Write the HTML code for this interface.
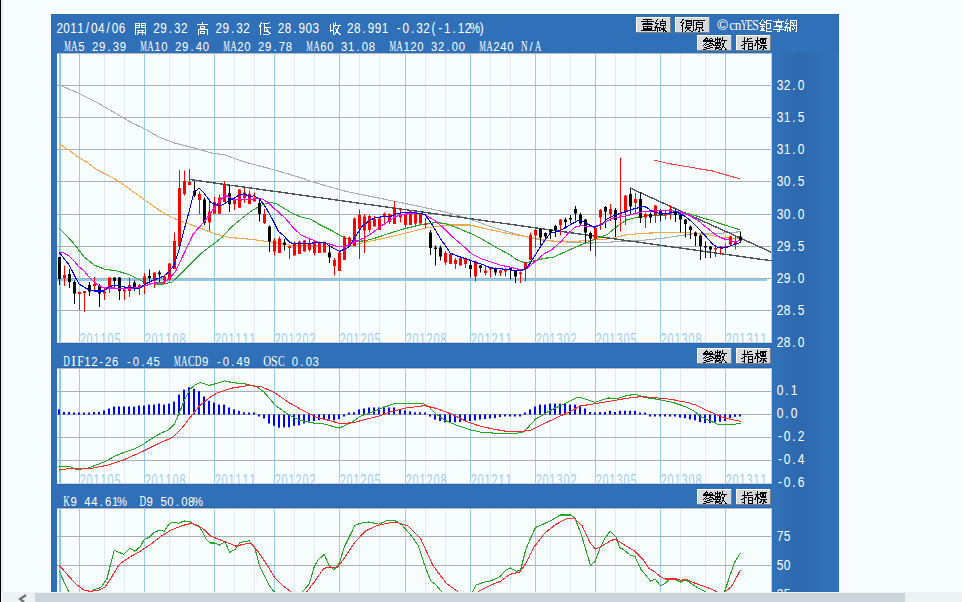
<!DOCTYPE html>
<html><head><meta charset="utf-8"><title>chart</title>
<style>
html,body{margin:0;padding:0;background:#f7fcfe;width:962px;height:602px;overflow:hidden;}
svg{display:block;}
</style></head><body>
<svg width="962" height="602" viewBox="0 0 962 602" shape-rendering="auto">
<rect x="0" y="0" width="962" height="602" fill="#f7fcfe"/>
<rect x="0" y="0" width="1" height="602" fill="#000000"/>
<rect x="1" y="0" width="1" height="592" fill="#e9f1f9"/>
<rect x="2" y="0" width="1" height="592" fill="#dfe7ed"/>
<rect x="51" y="14" width="788" height="578" fill="#3070b8"/>
<rect x="51" y="14" width="788" height="1" fill="#2d6ab0"/>
<linearGradient id="axg" x1="0" x2="1" y1="0" y2="0"><stop offset="0" stop-color="#3173ba"/><stop offset="0.4" stop-color="#2d68ae"/><stop offset="1" stop-color="#3374bc"/></linearGradient>
<rect x="772" y="53" width="67" height="539" fill="url(#axg)"/>
<rect x="57" y="53" width="715" height="290" fill="#f8fdfe"/>
<clipPath id="clip0"><rect x="57" y="53" width="715" height="290"/></clipPath>
<g clip-path="url(#clip0)">
<rect x="104" y="53" width="1" height="290" fill="#e2eaf0"/>
<rect x="124" y="53" width="1" height="290" fill="#e2eaf0"/>
<rect x="169" y="53" width="1" height="290" fill="#e2eaf0"/>
<rect x="189" y="53" width="1" height="290" fill="#e2eaf0"/>
<rect x="234" y="53" width="1" height="290" fill="#e2eaf0"/>
<rect x="254" y="53" width="1" height="290" fill="#e2eaf0"/>
<rect x="294" y="53" width="1" height="290" fill="#e2eaf0"/>
<rect x="314" y="53" width="1" height="290" fill="#e2eaf0"/>
<rect x="359" y="53" width="1" height="290" fill="#e2eaf0"/>
<rect x="379" y="53" width="1" height="290" fill="#e2eaf0"/>
<rect x="425" y="53" width="1" height="290" fill="#e2eaf0"/>
<rect x="445" y="53" width="1" height="290" fill="#e2eaf0"/>
<rect x="490" y="53" width="1" height="290" fill="#e2eaf0"/>
<rect x="510" y="53" width="1" height="290" fill="#e2eaf0"/>
<rect x="550" y="53" width="1" height="290" fill="#e2eaf0"/>
<rect x="570" y="53" width="1" height="290" fill="#e2eaf0"/>
<rect x="615" y="53" width="1" height="290" fill="#e2eaf0"/>
<rect x="635" y="53" width="1" height="290" fill="#e2eaf0"/>
<rect x="680" y="53" width="1" height="290" fill="#e2eaf0"/>
<rect x="705" y="53" width="1" height="290" fill="#e2eaf0"/>
<rect x="79" y="53" width="1" height="290" fill="#9acdee"/>
<rect x="144" y="53" width="1" height="290" fill="#9acdee"/>
<rect x="214" y="53" width="1" height="290" fill="#9acdee"/>
<rect x="274" y="53" width="1" height="290" fill="#9acdee"/>
<rect x="339" y="53" width="1" height="290" fill="#9acdee"/>
<rect x="405" y="53" width="1" height="290" fill="#9acdee"/>
<rect x="470" y="53" width="1" height="290" fill="#9acdee"/>
<rect x="535" y="53" width="1" height="290" fill="#9acdee"/>
<rect x="595" y="53" width="1" height="290" fill="#9acdee"/>
<rect x="660" y="53" width="1" height="290" fill="#9acdee"/>
<rect x="725" y="53" width="1" height="290" fill="#9acdee"/>
<rect x="59" y="53" width="2" height="290" fill="#8dc6f0"/>
<rect x="57" y="85" width="715" height="1" fill="#a8b0b6"/>
<rect x="57" y="117" width="715" height="1" fill="#a8b0b6"/>
<rect x="57" y="149" width="715" height="1" fill="#a8b0b6"/>
<rect x="57" y="181" width="715" height="1" fill="#a8b0b6"/>
<rect x="57" y="214" width="715" height="1" fill="#a8b0b6"/>
<rect x="57" y="246" width="715" height="1" fill="#a8b0b6"/>
<rect x="57" y="278" width="715" height="1" fill="#a8b0b6"/>
<rect x="57" y="310" width="715" height="1" fill="#a8b0b6"/>
<rect x="771" y="53" width="1" height="290" fill="#a8d4ee"/>
<rect x="57" y="53" width="715" height="1" fill="#b4bcc4"/>
<rect x="57" y="342" width="715" height="1" fill="#d2d6d8"/>
<text transform="translate(82.67,344.6) scale(0.660,1)" text-anchor="middle" font-family='"Liberation Sans", sans-serif' font-size="16.50" font-weight="normal" fill="#a2cdeb">2</text>
<text transform="translate(89.62,344.6) scale(0.660,1)" text-anchor="middle" font-family='"Liberation Sans", sans-serif' font-size="16.50" font-weight="normal" fill="#a2cdeb">0</text>
<text transform="translate(96.58,344.6) scale(0.660,1)" text-anchor="middle" font-family='"Liberation Sans", sans-serif' font-size="16.50" font-weight="normal" fill="#a2cdeb">1</text>
<text transform="translate(103.53,344.6) scale(0.660,1)" text-anchor="middle" font-family='"Liberation Sans", sans-serif' font-size="16.50" font-weight="normal" fill="#a2cdeb">1</text>
<text transform="translate(110.48,344.6) scale(0.660,1)" text-anchor="middle" font-family='"Liberation Sans", sans-serif' font-size="16.50" font-weight="normal" fill="#a2cdeb">0</text>
<text transform="translate(117.43,344.6) scale(0.660,1)" text-anchor="middle" font-family='"Liberation Sans", sans-serif' font-size="16.50" font-weight="normal" fill="#a2cdeb">5</text>
<text transform="translate(147.67,344.6) scale(0.660,1)" text-anchor="middle" font-family='"Liberation Sans", sans-serif' font-size="16.50" font-weight="normal" fill="#a2cdeb">2</text>
<text transform="translate(154.62,344.6) scale(0.660,1)" text-anchor="middle" font-family='"Liberation Sans", sans-serif' font-size="16.50" font-weight="normal" fill="#a2cdeb">0</text>
<text transform="translate(161.57,344.6) scale(0.660,1)" text-anchor="middle" font-family='"Liberation Sans", sans-serif' font-size="16.50" font-weight="normal" fill="#a2cdeb">1</text>
<text transform="translate(168.52,344.6) scale(0.660,1)" text-anchor="middle" font-family='"Liberation Sans", sans-serif' font-size="16.50" font-weight="normal" fill="#a2cdeb">1</text>
<text transform="translate(175.47,344.6) scale(0.660,1)" text-anchor="middle" font-family='"Liberation Sans", sans-serif' font-size="16.50" font-weight="normal" fill="#a2cdeb">0</text>
<text transform="translate(182.42,344.6) scale(0.660,1)" text-anchor="middle" font-family='"Liberation Sans", sans-serif' font-size="16.50" font-weight="normal" fill="#a2cdeb">8</text>
<text transform="translate(217.67,344.6) scale(0.660,1)" text-anchor="middle" font-family='"Liberation Sans", sans-serif' font-size="16.50" font-weight="normal" fill="#a2cdeb">2</text>
<text transform="translate(224.62,344.6) scale(0.660,1)" text-anchor="middle" font-family='"Liberation Sans", sans-serif' font-size="16.50" font-weight="normal" fill="#a2cdeb">0</text>
<text transform="translate(231.57,344.6) scale(0.660,1)" text-anchor="middle" font-family='"Liberation Sans", sans-serif' font-size="16.50" font-weight="normal" fill="#a2cdeb">1</text>
<text transform="translate(238.52,344.6) scale(0.660,1)" text-anchor="middle" font-family='"Liberation Sans", sans-serif' font-size="16.50" font-weight="normal" fill="#a2cdeb">1</text>
<text transform="translate(245.47,344.6) scale(0.660,1)" text-anchor="middle" font-family='"Liberation Sans", sans-serif' font-size="16.50" font-weight="normal" fill="#a2cdeb">1</text>
<text transform="translate(252.42,344.6) scale(0.660,1)" text-anchor="middle" font-family='"Liberation Sans", sans-serif' font-size="16.50" font-weight="normal" fill="#a2cdeb">1</text>
<text transform="translate(277.68,344.6) scale(0.660,1)" text-anchor="middle" font-family='"Liberation Sans", sans-serif' font-size="16.50" font-weight="normal" fill="#a2cdeb">2</text>
<text transform="translate(284.62,344.6) scale(0.660,1)" text-anchor="middle" font-family='"Liberation Sans", sans-serif' font-size="16.50" font-weight="normal" fill="#a2cdeb">0</text>
<text transform="translate(291.57,344.6) scale(0.660,1)" text-anchor="middle" font-family='"Liberation Sans", sans-serif' font-size="16.50" font-weight="normal" fill="#a2cdeb">1</text>
<text transform="translate(298.52,344.6) scale(0.660,1)" text-anchor="middle" font-family='"Liberation Sans", sans-serif' font-size="16.50" font-weight="normal" fill="#a2cdeb">2</text>
<text transform="translate(305.47,344.6) scale(0.660,1)" text-anchor="middle" font-family='"Liberation Sans", sans-serif' font-size="16.50" font-weight="normal" fill="#a2cdeb">0</text>
<text transform="translate(312.42,344.6) scale(0.660,1)" text-anchor="middle" font-family='"Liberation Sans", sans-serif' font-size="16.50" font-weight="normal" fill="#a2cdeb">2</text>
<text transform="translate(342.68,344.6) scale(0.660,1)" text-anchor="middle" font-family='"Liberation Sans", sans-serif' font-size="16.50" font-weight="normal" fill="#a2cdeb">2</text>
<text transform="translate(349.62,344.6) scale(0.660,1)" text-anchor="middle" font-family='"Liberation Sans", sans-serif' font-size="16.50" font-weight="normal" fill="#a2cdeb">0</text>
<text transform="translate(356.57,344.6) scale(0.660,1)" text-anchor="middle" font-family='"Liberation Sans", sans-serif' font-size="16.50" font-weight="normal" fill="#a2cdeb">1</text>
<text transform="translate(363.52,344.6) scale(0.660,1)" text-anchor="middle" font-family='"Liberation Sans", sans-serif' font-size="16.50" font-weight="normal" fill="#a2cdeb">2</text>
<text transform="translate(370.47,344.6) scale(0.660,1)" text-anchor="middle" font-family='"Liberation Sans", sans-serif' font-size="16.50" font-weight="normal" fill="#a2cdeb">0</text>
<text transform="translate(377.42,344.6) scale(0.660,1)" text-anchor="middle" font-family='"Liberation Sans", sans-serif' font-size="16.50" font-weight="normal" fill="#a2cdeb">5</text>
<text transform="translate(408.68,344.6) scale(0.660,1)" text-anchor="middle" font-family='"Liberation Sans", sans-serif' font-size="16.50" font-weight="normal" fill="#a2cdeb">2</text>
<text transform="translate(415.62,344.6) scale(0.660,1)" text-anchor="middle" font-family='"Liberation Sans", sans-serif' font-size="16.50" font-weight="normal" fill="#a2cdeb">0</text>
<text transform="translate(422.57,344.6) scale(0.660,1)" text-anchor="middle" font-family='"Liberation Sans", sans-serif' font-size="16.50" font-weight="normal" fill="#a2cdeb">1</text>
<text transform="translate(429.52,344.6) scale(0.660,1)" text-anchor="middle" font-family='"Liberation Sans", sans-serif' font-size="16.50" font-weight="normal" fill="#a2cdeb">2</text>
<text transform="translate(436.47,344.6) scale(0.660,1)" text-anchor="middle" font-family='"Liberation Sans", sans-serif' font-size="16.50" font-weight="normal" fill="#a2cdeb">0</text>
<text transform="translate(443.42,344.6) scale(0.660,1)" text-anchor="middle" font-family='"Liberation Sans", sans-serif' font-size="16.50" font-weight="normal" fill="#a2cdeb">8</text>
<text transform="translate(473.68,344.6) scale(0.660,1)" text-anchor="middle" font-family='"Liberation Sans", sans-serif' font-size="16.50" font-weight="normal" fill="#a2cdeb">2</text>
<text transform="translate(480.62,344.6) scale(0.660,1)" text-anchor="middle" font-family='"Liberation Sans", sans-serif' font-size="16.50" font-weight="normal" fill="#a2cdeb">0</text>
<text transform="translate(487.57,344.6) scale(0.660,1)" text-anchor="middle" font-family='"Liberation Sans", sans-serif' font-size="16.50" font-weight="normal" fill="#a2cdeb">1</text>
<text transform="translate(494.52,344.6) scale(0.660,1)" text-anchor="middle" font-family='"Liberation Sans", sans-serif' font-size="16.50" font-weight="normal" fill="#a2cdeb">2</text>
<text transform="translate(501.47,344.6) scale(0.660,1)" text-anchor="middle" font-family='"Liberation Sans", sans-serif' font-size="16.50" font-weight="normal" fill="#a2cdeb">1</text>
<text transform="translate(508.42,344.6) scale(0.660,1)" text-anchor="middle" font-family='"Liberation Sans", sans-serif' font-size="16.50" font-weight="normal" fill="#a2cdeb">1</text>
<text transform="translate(538.68,344.6) scale(0.660,1)" text-anchor="middle" font-family='"Liberation Sans", sans-serif' font-size="16.50" font-weight="normal" fill="#a2cdeb">2</text>
<text transform="translate(545.63,344.6) scale(0.660,1)" text-anchor="middle" font-family='"Liberation Sans", sans-serif' font-size="16.50" font-weight="normal" fill="#a2cdeb">0</text>
<text transform="translate(552.58,344.6) scale(0.660,1)" text-anchor="middle" font-family='"Liberation Sans", sans-serif' font-size="16.50" font-weight="normal" fill="#a2cdeb">1</text>
<text transform="translate(559.53,344.6) scale(0.660,1)" text-anchor="middle" font-family='"Liberation Sans", sans-serif' font-size="16.50" font-weight="normal" fill="#a2cdeb">3</text>
<text transform="translate(566.48,344.6) scale(0.660,1)" text-anchor="middle" font-family='"Liberation Sans", sans-serif' font-size="16.50" font-weight="normal" fill="#a2cdeb">0</text>
<text transform="translate(573.43,344.6) scale(0.660,1)" text-anchor="middle" font-family='"Liberation Sans", sans-serif' font-size="16.50" font-weight="normal" fill="#a2cdeb">2</text>
<text transform="translate(598.68,344.6) scale(0.660,1)" text-anchor="middle" font-family='"Liberation Sans", sans-serif' font-size="16.50" font-weight="normal" fill="#a2cdeb">2</text>
<text transform="translate(605.63,344.6) scale(0.660,1)" text-anchor="middle" font-family='"Liberation Sans", sans-serif' font-size="16.50" font-weight="normal" fill="#a2cdeb">0</text>
<text transform="translate(612.58,344.6) scale(0.660,1)" text-anchor="middle" font-family='"Liberation Sans", sans-serif' font-size="16.50" font-weight="normal" fill="#a2cdeb">1</text>
<text transform="translate(619.53,344.6) scale(0.660,1)" text-anchor="middle" font-family='"Liberation Sans", sans-serif' font-size="16.50" font-weight="normal" fill="#a2cdeb">3</text>
<text transform="translate(626.48,344.6) scale(0.660,1)" text-anchor="middle" font-family='"Liberation Sans", sans-serif' font-size="16.50" font-weight="normal" fill="#a2cdeb">0</text>
<text transform="translate(633.43,344.6) scale(0.660,1)" text-anchor="middle" font-family='"Liberation Sans", sans-serif' font-size="16.50" font-weight="normal" fill="#a2cdeb">5</text>
<text transform="translate(663.68,344.6) scale(0.660,1)" text-anchor="middle" font-family='"Liberation Sans", sans-serif' font-size="16.50" font-weight="normal" fill="#a2cdeb">2</text>
<text transform="translate(670.63,344.6) scale(0.660,1)" text-anchor="middle" font-family='"Liberation Sans", sans-serif' font-size="16.50" font-weight="normal" fill="#a2cdeb">0</text>
<text transform="translate(677.58,344.6) scale(0.660,1)" text-anchor="middle" font-family='"Liberation Sans", sans-serif' font-size="16.50" font-weight="normal" fill="#a2cdeb">1</text>
<text transform="translate(684.53,344.6) scale(0.660,1)" text-anchor="middle" font-family='"Liberation Sans", sans-serif' font-size="16.50" font-weight="normal" fill="#a2cdeb">3</text>
<text transform="translate(691.48,344.6) scale(0.660,1)" text-anchor="middle" font-family='"Liberation Sans", sans-serif' font-size="16.50" font-weight="normal" fill="#a2cdeb">0</text>
<text transform="translate(698.43,344.6) scale(0.660,1)" text-anchor="middle" font-family='"Liberation Sans", sans-serif' font-size="16.50" font-weight="normal" fill="#a2cdeb">8</text>
<text transform="translate(728.68,344.6) scale(0.660,1)" text-anchor="middle" font-family='"Liberation Sans", sans-serif' font-size="16.50" font-weight="normal" fill="#a2cdeb">2</text>
<text transform="translate(735.63,344.6) scale(0.660,1)" text-anchor="middle" font-family='"Liberation Sans", sans-serif' font-size="16.50" font-weight="normal" fill="#a2cdeb">0</text>
<text transform="translate(742.58,344.6) scale(0.660,1)" text-anchor="middle" font-family='"Liberation Sans", sans-serif' font-size="16.50" font-weight="normal" fill="#a2cdeb">1</text>
<text transform="translate(749.53,344.6) scale(0.660,1)" text-anchor="middle" font-family='"Liberation Sans", sans-serif' font-size="16.50" font-weight="normal" fill="#a2cdeb">3</text>
<text transform="translate(756.48,344.6) scale(0.660,1)" text-anchor="middle" font-family='"Liberation Sans", sans-serif' font-size="16.50" font-weight="normal" fill="#a2cdeb">1</text>
<text transform="translate(763.43,344.6) scale(0.660,1)" text-anchor="middle" font-family='"Liberation Sans", sans-serif' font-size="16.50" font-weight="normal" fill="#a2cdeb">1</text>
</g>
<rect x="57" y="368" width="715" height="116" fill="#f8fdfe"/>
<clipPath id="clip1"><rect x="57" y="368" width="715" height="116"/></clipPath>
<g clip-path="url(#clip1)">
<rect x="104" y="368" width="1" height="116" fill="#e2eaf0"/>
<rect x="124" y="368" width="1" height="116" fill="#e2eaf0"/>
<rect x="169" y="368" width="1" height="116" fill="#e2eaf0"/>
<rect x="189" y="368" width="1" height="116" fill="#e2eaf0"/>
<rect x="234" y="368" width="1" height="116" fill="#e2eaf0"/>
<rect x="254" y="368" width="1" height="116" fill="#e2eaf0"/>
<rect x="294" y="368" width="1" height="116" fill="#e2eaf0"/>
<rect x="314" y="368" width="1" height="116" fill="#e2eaf0"/>
<rect x="359" y="368" width="1" height="116" fill="#e2eaf0"/>
<rect x="379" y="368" width="1" height="116" fill="#e2eaf0"/>
<rect x="425" y="368" width="1" height="116" fill="#e2eaf0"/>
<rect x="445" y="368" width="1" height="116" fill="#e2eaf0"/>
<rect x="490" y="368" width="1" height="116" fill="#e2eaf0"/>
<rect x="510" y="368" width="1" height="116" fill="#e2eaf0"/>
<rect x="550" y="368" width="1" height="116" fill="#e2eaf0"/>
<rect x="570" y="368" width="1" height="116" fill="#e2eaf0"/>
<rect x="615" y="368" width="1" height="116" fill="#e2eaf0"/>
<rect x="635" y="368" width="1" height="116" fill="#e2eaf0"/>
<rect x="680" y="368" width="1" height="116" fill="#e2eaf0"/>
<rect x="705" y="368" width="1" height="116" fill="#e2eaf0"/>
<rect x="79" y="368" width="1" height="116" fill="#9acdee"/>
<rect x="144" y="368" width="1" height="116" fill="#9acdee"/>
<rect x="214" y="368" width="1" height="116" fill="#9acdee"/>
<rect x="274" y="368" width="1" height="116" fill="#9acdee"/>
<rect x="339" y="368" width="1" height="116" fill="#9acdee"/>
<rect x="405" y="368" width="1" height="116" fill="#9acdee"/>
<rect x="470" y="368" width="1" height="116" fill="#9acdee"/>
<rect x="535" y="368" width="1" height="116" fill="#9acdee"/>
<rect x="595" y="368" width="1" height="116" fill="#9acdee"/>
<rect x="660" y="368" width="1" height="116" fill="#9acdee"/>
<rect x="725" y="368" width="1" height="116" fill="#9acdee"/>
<rect x="59" y="368" width="2" height="116" fill="#8dc6f0"/>
<rect x="57" y="391" width="715" height="1" fill="#a8b0b6"/>
<rect x="57" y="414" width="715" height="1" fill="#a8b0b6"/>
<rect x="57" y="437" width="715" height="1" fill="#a8b0b6"/>
<rect x="57" y="460" width="715" height="1" fill="#a8b0b6"/>
<rect x="771" y="368" width="1" height="116" fill="#a8d4ee"/>
<rect x="57" y="368" width="715" height="1" fill="#b4bcc4"/>
<rect x="57" y="483" width="715" height="1" fill="#d2d6d8"/>
<text transform="translate(82.67,485.6) scale(0.660,1)" text-anchor="middle" font-family='"Liberation Sans", sans-serif' font-size="16.50" font-weight="normal" fill="#a2cdeb">2</text>
<text transform="translate(89.62,485.6) scale(0.660,1)" text-anchor="middle" font-family='"Liberation Sans", sans-serif' font-size="16.50" font-weight="normal" fill="#a2cdeb">0</text>
<text transform="translate(96.58,485.6) scale(0.660,1)" text-anchor="middle" font-family='"Liberation Sans", sans-serif' font-size="16.50" font-weight="normal" fill="#a2cdeb">1</text>
<text transform="translate(103.53,485.6) scale(0.660,1)" text-anchor="middle" font-family='"Liberation Sans", sans-serif' font-size="16.50" font-weight="normal" fill="#a2cdeb">1</text>
<text transform="translate(110.48,485.6) scale(0.660,1)" text-anchor="middle" font-family='"Liberation Sans", sans-serif' font-size="16.50" font-weight="normal" fill="#a2cdeb">0</text>
<text transform="translate(117.43,485.6) scale(0.660,1)" text-anchor="middle" font-family='"Liberation Sans", sans-serif' font-size="16.50" font-weight="normal" fill="#a2cdeb">5</text>
<text transform="translate(147.67,485.6) scale(0.660,1)" text-anchor="middle" font-family='"Liberation Sans", sans-serif' font-size="16.50" font-weight="normal" fill="#a2cdeb">2</text>
<text transform="translate(154.62,485.6) scale(0.660,1)" text-anchor="middle" font-family='"Liberation Sans", sans-serif' font-size="16.50" font-weight="normal" fill="#a2cdeb">0</text>
<text transform="translate(161.57,485.6) scale(0.660,1)" text-anchor="middle" font-family='"Liberation Sans", sans-serif' font-size="16.50" font-weight="normal" fill="#a2cdeb">1</text>
<text transform="translate(168.52,485.6) scale(0.660,1)" text-anchor="middle" font-family='"Liberation Sans", sans-serif' font-size="16.50" font-weight="normal" fill="#a2cdeb">1</text>
<text transform="translate(175.47,485.6) scale(0.660,1)" text-anchor="middle" font-family='"Liberation Sans", sans-serif' font-size="16.50" font-weight="normal" fill="#a2cdeb">0</text>
<text transform="translate(182.42,485.6) scale(0.660,1)" text-anchor="middle" font-family='"Liberation Sans", sans-serif' font-size="16.50" font-weight="normal" fill="#a2cdeb">8</text>
<text transform="translate(217.67,485.6) scale(0.660,1)" text-anchor="middle" font-family='"Liberation Sans", sans-serif' font-size="16.50" font-weight="normal" fill="#a2cdeb">2</text>
<text transform="translate(224.62,485.6) scale(0.660,1)" text-anchor="middle" font-family='"Liberation Sans", sans-serif' font-size="16.50" font-weight="normal" fill="#a2cdeb">0</text>
<text transform="translate(231.57,485.6) scale(0.660,1)" text-anchor="middle" font-family='"Liberation Sans", sans-serif' font-size="16.50" font-weight="normal" fill="#a2cdeb">1</text>
<text transform="translate(238.52,485.6) scale(0.660,1)" text-anchor="middle" font-family='"Liberation Sans", sans-serif' font-size="16.50" font-weight="normal" fill="#a2cdeb">1</text>
<text transform="translate(245.47,485.6) scale(0.660,1)" text-anchor="middle" font-family='"Liberation Sans", sans-serif' font-size="16.50" font-weight="normal" fill="#a2cdeb">1</text>
<text transform="translate(252.42,485.6) scale(0.660,1)" text-anchor="middle" font-family='"Liberation Sans", sans-serif' font-size="16.50" font-weight="normal" fill="#a2cdeb">1</text>
<text transform="translate(277.68,485.6) scale(0.660,1)" text-anchor="middle" font-family='"Liberation Sans", sans-serif' font-size="16.50" font-weight="normal" fill="#a2cdeb">2</text>
<text transform="translate(284.62,485.6) scale(0.660,1)" text-anchor="middle" font-family='"Liberation Sans", sans-serif' font-size="16.50" font-weight="normal" fill="#a2cdeb">0</text>
<text transform="translate(291.57,485.6) scale(0.660,1)" text-anchor="middle" font-family='"Liberation Sans", sans-serif' font-size="16.50" font-weight="normal" fill="#a2cdeb">1</text>
<text transform="translate(298.52,485.6) scale(0.660,1)" text-anchor="middle" font-family='"Liberation Sans", sans-serif' font-size="16.50" font-weight="normal" fill="#a2cdeb">2</text>
<text transform="translate(305.47,485.6) scale(0.660,1)" text-anchor="middle" font-family='"Liberation Sans", sans-serif' font-size="16.50" font-weight="normal" fill="#a2cdeb">0</text>
<text transform="translate(312.42,485.6) scale(0.660,1)" text-anchor="middle" font-family='"Liberation Sans", sans-serif' font-size="16.50" font-weight="normal" fill="#a2cdeb">2</text>
<text transform="translate(342.68,485.6) scale(0.660,1)" text-anchor="middle" font-family='"Liberation Sans", sans-serif' font-size="16.50" font-weight="normal" fill="#a2cdeb">2</text>
<text transform="translate(349.62,485.6) scale(0.660,1)" text-anchor="middle" font-family='"Liberation Sans", sans-serif' font-size="16.50" font-weight="normal" fill="#a2cdeb">0</text>
<text transform="translate(356.57,485.6) scale(0.660,1)" text-anchor="middle" font-family='"Liberation Sans", sans-serif' font-size="16.50" font-weight="normal" fill="#a2cdeb">1</text>
<text transform="translate(363.52,485.6) scale(0.660,1)" text-anchor="middle" font-family='"Liberation Sans", sans-serif' font-size="16.50" font-weight="normal" fill="#a2cdeb">2</text>
<text transform="translate(370.47,485.6) scale(0.660,1)" text-anchor="middle" font-family='"Liberation Sans", sans-serif' font-size="16.50" font-weight="normal" fill="#a2cdeb">0</text>
<text transform="translate(377.42,485.6) scale(0.660,1)" text-anchor="middle" font-family='"Liberation Sans", sans-serif' font-size="16.50" font-weight="normal" fill="#a2cdeb">5</text>
<text transform="translate(408.68,485.6) scale(0.660,1)" text-anchor="middle" font-family='"Liberation Sans", sans-serif' font-size="16.50" font-weight="normal" fill="#a2cdeb">2</text>
<text transform="translate(415.62,485.6) scale(0.660,1)" text-anchor="middle" font-family='"Liberation Sans", sans-serif' font-size="16.50" font-weight="normal" fill="#a2cdeb">0</text>
<text transform="translate(422.57,485.6) scale(0.660,1)" text-anchor="middle" font-family='"Liberation Sans", sans-serif' font-size="16.50" font-weight="normal" fill="#a2cdeb">1</text>
<text transform="translate(429.52,485.6) scale(0.660,1)" text-anchor="middle" font-family='"Liberation Sans", sans-serif' font-size="16.50" font-weight="normal" fill="#a2cdeb">2</text>
<text transform="translate(436.47,485.6) scale(0.660,1)" text-anchor="middle" font-family='"Liberation Sans", sans-serif' font-size="16.50" font-weight="normal" fill="#a2cdeb">0</text>
<text transform="translate(443.42,485.6) scale(0.660,1)" text-anchor="middle" font-family='"Liberation Sans", sans-serif' font-size="16.50" font-weight="normal" fill="#a2cdeb">8</text>
<text transform="translate(473.68,485.6) scale(0.660,1)" text-anchor="middle" font-family='"Liberation Sans", sans-serif' font-size="16.50" font-weight="normal" fill="#a2cdeb">2</text>
<text transform="translate(480.62,485.6) scale(0.660,1)" text-anchor="middle" font-family='"Liberation Sans", sans-serif' font-size="16.50" font-weight="normal" fill="#a2cdeb">0</text>
<text transform="translate(487.57,485.6) scale(0.660,1)" text-anchor="middle" font-family='"Liberation Sans", sans-serif' font-size="16.50" font-weight="normal" fill="#a2cdeb">1</text>
<text transform="translate(494.52,485.6) scale(0.660,1)" text-anchor="middle" font-family='"Liberation Sans", sans-serif' font-size="16.50" font-weight="normal" fill="#a2cdeb">2</text>
<text transform="translate(501.47,485.6) scale(0.660,1)" text-anchor="middle" font-family='"Liberation Sans", sans-serif' font-size="16.50" font-weight="normal" fill="#a2cdeb">1</text>
<text transform="translate(508.42,485.6) scale(0.660,1)" text-anchor="middle" font-family='"Liberation Sans", sans-serif' font-size="16.50" font-weight="normal" fill="#a2cdeb">1</text>
<text transform="translate(538.68,485.6) scale(0.660,1)" text-anchor="middle" font-family='"Liberation Sans", sans-serif' font-size="16.50" font-weight="normal" fill="#a2cdeb">2</text>
<text transform="translate(545.63,485.6) scale(0.660,1)" text-anchor="middle" font-family='"Liberation Sans", sans-serif' font-size="16.50" font-weight="normal" fill="#a2cdeb">0</text>
<text transform="translate(552.58,485.6) scale(0.660,1)" text-anchor="middle" font-family='"Liberation Sans", sans-serif' font-size="16.50" font-weight="normal" fill="#a2cdeb">1</text>
<text transform="translate(559.53,485.6) scale(0.660,1)" text-anchor="middle" font-family='"Liberation Sans", sans-serif' font-size="16.50" font-weight="normal" fill="#a2cdeb">3</text>
<text transform="translate(566.48,485.6) scale(0.660,1)" text-anchor="middle" font-family='"Liberation Sans", sans-serif' font-size="16.50" font-weight="normal" fill="#a2cdeb">0</text>
<text transform="translate(573.43,485.6) scale(0.660,1)" text-anchor="middle" font-family='"Liberation Sans", sans-serif' font-size="16.50" font-weight="normal" fill="#a2cdeb">2</text>
<text transform="translate(598.68,485.6) scale(0.660,1)" text-anchor="middle" font-family='"Liberation Sans", sans-serif' font-size="16.50" font-weight="normal" fill="#a2cdeb">2</text>
<text transform="translate(605.63,485.6) scale(0.660,1)" text-anchor="middle" font-family='"Liberation Sans", sans-serif' font-size="16.50" font-weight="normal" fill="#a2cdeb">0</text>
<text transform="translate(612.58,485.6) scale(0.660,1)" text-anchor="middle" font-family='"Liberation Sans", sans-serif' font-size="16.50" font-weight="normal" fill="#a2cdeb">1</text>
<text transform="translate(619.53,485.6) scale(0.660,1)" text-anchor="middle" font-family='"Liberation Sans", sans-serif' font-size="16.50" font-weight="normal" fill="#a2cdeb">3</text>
<text transform="translate(626.48,485.6) scale(0.660,1)" text-anchor="middle" font-family='"Liberation Sans", sans-serif' font-size="16.50" font-weight="normal" fill="#a2cdeb">0</text>
<text transform="translate(633.43,485.6) scale(0.660,1)" text-anchor="middle" font-family='"Liberation Sans", sans-serif' font-size="16.50" font-weight="normal" fill="#a2cdeb">5</text>
<text transform="translate(663.68,485.6) scale(0.660,1)" text-anchor="middle" font-family='"Liberation Sans", sans-serif' font-size="16.50" font-weight="normal" fill="#a2cdeb">2</text>
<text transform="translate(670.63,485.6) scale(0.660,1)" text-anchor="middle" font-family='"Liberation Sans", sans-serif' font-size="16.50" font-weight="normal" fill="#a2cdeb">0</text>
<text transform="translate(677.58,485.6) scale(0.660,1)" text-anchor="middle" font-family='"Liberation Sans", sans-serif' font-size="16.50" font-weight="normal" fill="#a2cdeb">1</text>
<text transform="translate(684.53,485.6) scale(0.660,1)" text-anchor="middle" font-family='"Liberation Sans", sans-serif' font-size="16.50" font-weight="normal" fill="#a2cdeb">3</text>
<text transform="translate(691.48,485.6) scale(0.660,1)" text-anchor="middle" font-family='"Liberation Sans", sans-serif' font-size="16.50" font-weight="normal" fill="#a2cdeb">0</text>
<text transform="translate(698.43,485.6) scale(0.660,1)" text-anchor="middle" font-family='"Liberation Sans", sans-serif' font-size="16.50" font-weight="normal" fill="#a2cdeb">8</text>
<text transform="translate(728.68,485.6) scale(0.660,1)" text-anchor="middle" font-family='"Liberation Sans", sans-serif' font-size="16.50" font-weight="normal" fill="#a2cdeb">2</text>
<text transform="translate(735.63,485.6) scale(0.660,1)" text-anchor="middle" font-family='"Liberation Sans", sans-serif' font-size="16.50" font-weight="normal" fill="#a2cdeb">0</text>
<text transform="translate(742.58,485.6) scale(0.660,1)" text-anchor="middle" font-family='"Liberation Sans", sans-serif' font-size="16.50" font-weight="normal" fill="#a2cdeb">1</text>
<text transform="translate(749.53,485.6) scale(0.660,1)" text-anchor="middle" font-family='"Liberation Sans", sans-serif' font-size="16.50" font-weight="normal" fill="#a2cdeb">3</text>
<text transform="translate(756.48,485.6) scale(0.660,1)" text-anchor="middle" font-family='"Liberation Sans", sans-serif' font-size="16.50" font-weight="normal" fill="#a2cdeb">1</text>
<text transform="translate(763.43,485.6) scale(0.660,1)" text-anchor="middle" font-family='"Liberation Sans", sans-serif' font-size="16.50" font-weight="normal" fill="#a2cdeb">1</text>
</g>
<rect x="57" y="508" width="715" height="92" fill="#f8fdfe"/>
<clipPath id="clip2"><rect x="57" y="508" width="715" height="84"/></clipPath>
<g clip-path="url(#clip2)">
<rect x="104" y="508" width="1" height="92" fill="#e2eaf0"/>
<rect x="124" y="508" width="1" height="92" fill="#e2eaf0"/>
<rect x="169" y="508" width="1" height="92" fill="#e2eaf0"/>
<rect x="189" y="508" width="1" height="92" fill="#e2eaf0"/>
<rect x="234" y="508" width="1" height="92" fill="#e2eaf0"/>
<rect x="254" y="508" width="1" height="92" fill="#e2eaf0"/>
<rect x="294" y="508" width="1" height="92" fill="#e2eaf0"/>
<rect x="314" y="508" width="1" height="92" fill="#e2eaf0"/>
<rect x="359" y="508" width="1" height="92" fill="#e2eaf0"/>
<rect x="379" y="508" width="1" height="92" fill="#e2eaf0"/>
<rect x="425" y="508" width="1" height="92" fill="#e2eaf0"/>
<rect x="445" y="508" width="1" height="92" fill="#e2eaf0"/>
<rect x="490" y="508" width="1" height="92" fill="#e2eaf0"/>
<rect x="510" y="508" width="1" height="92" fill="#e2eaf0"/>
<rect x="550" y="508" width="1" height="92" fill="#e2eaf0"/>
<rect x="570" y="508" width="1" height="92" fill="#e2eaf0"/>
<rect x="615" y="508" width="1" height="92" fill="#e2eaf0"/>
<rect x="635" y="508" width="1" height="92" fill="#e2eaf0"/>
<rect x="680" y="508" width="1" height="92" fill="#e2eaf0"/>
<rect x="705" y="508" width="1" height="92" fill="#e2eaf0"/>
<rect x="79" y="508" width="1" height="92" fill="#9acdee"/>
<rect x="144" y="508" width="1" height="92" fill="#9acdee"/>
<rect x="214" y="508" width="1" height="92" fill="#9acdee"/>
<rect x="274" y="508" width="1" height="92" fill="#9acdee"/>
<rect x="339" y="508" width="1" height="92" fill="#9acdee"/>
<rect x="405" y="508" width="1" height="92" fill="#9acdee"/>
<rect x="470" y="508" width="1" height="92" fill="#9acdee"/>
<rect x="535" y="508" width="1" height="92" fill="#9acdee"/>
<rect x="595" y="508" width="1" height="92" fill="#9acdee"/>
<rect x="660" y="508" width="1" height="92" fill="#9acdee"/>
<rect x="725" y="508" width="1" height="92" fill="#9acdee"/>
<rect x="59" y="508" width="2" height="92" fill="#8dc6f0"/>
<rect x="57" y="536" width="715" height="1" fill="#a8b0b6"/>
<rect x="57" y="565" width="715" height="1" fill="#a8b0b6"/>
<rect x="771" y="508" width="1" height="92" fill="#a8d4ee"/>
<rect x="57" y="508" width="715" height="1" fill="#b4bcc4"/>
<rect x="57" y="599" width="715" height="1" fill="#d2d6d8"/>
</g>
<rect x="57" y="343" width="715" height="1" fill="#2a66ae"/>
<rect x="57" y="367" width="715" height="1" fill="#2a66ae"/>
<rect x="57" y="484" width="715" height="1" fill="#2a66ae"/>
<rect x="57" y="507" width="715" height="1" fill="#2a66ae"/>
<g clip-path="url(#clip0)">
<rect x="57" y="279" width="710" height="2" fill="#8ccbf1"/>
<polyline points="59.5,85.0 78.6,93.3 98.5,103.3 121.8,116.9 131.8,122.9 145.1,129.0 159.3,137.3 173.9,142.8 192.2,147.4 210.5,152.8 225.0,155.0 243.7,161.8 275.0,170.0 300.0,177.5 312.5,181.9 345.0,191.2 392.0,200.8 420.2,206.6 447.0,212.4 461.9,216.6 481.9,223.3 490.0,226.5 515.0,233.7 540.0,240.0 565.0,241.9 590.0,243.1 612.0,242.0 640.0,240.5 662.0,238.4 677.0,236.1 691.9,233.9 706.9,233.1 722.0,233.1 740.0,231.8" fill="none" stroke="#a8b0b6" stroke-width="1.1" stroke-linejoin="round" stroke-linecap="round" opacity="1" shape-rendering="crispEdges"/>
<polyline points="59.0,144.0 68.6,149.8 77.0,156.4 86.9,162.3 96.9,169.8 106.9,174.8 116.0,179.7 121.0,183.0 133.7,192.1 146.5,201.2 159.3,210.4 172.1,217.7 186.7,223.2 201.3,228.6 215.9,234.1 230.0,237.8 238.6,238.1 255.2,239.8 271.8,242.3 282.0,243.9 293.6,245.6 310.2,245.6 332.0,246.5 348.6,246.1 365.2,242.3 392.0,236.5 410.0,232.0 428.5,227.4 450.0,225.0 470.0,225.0 487.0,229.0 507.0,233.3 530.0,237.4 552.5,241.2 577.5,241.2 610.0,238.7 626.9,234.7 646.9,233.1 677.0,232.4 691.9,233.1 706.9,234.6 722.0,237.6 740.0,238.7" fill="none" stroke="#f8a848" stroke-width="1.1" stroke-linejoin="round" stroke-linecap="round" opacity="1" shape-rendering="crispEdges"/>
<polyline points="189.5,179.5 771.0,260.7" fill="none" stroke="#50565b" stroke-width="1.4" stroke-linejoin="round" stroke-linecap="round" opacity="1" shape-rendering="crispEdges"/>
<polyline points="630.0,188.0 771.0,252.0" fill="none" stroke="#50565b" stroke-width="1.4" stroke-linejoin="round" stroke-linecap="round" opacity="1" shape-rendering="crispEdges"/>
<polyline points="655.0,160.3 667.0,163.3 712.0,170.9 726.0,174.9 740.0,178.9" fill="none" stroke="#f04848" stroke-width="1.1" stroke-linejoin="round" stroke-linecap="round" opacity="1" shape-rendering="crispEdges"/>
<polyline points="59.0,228.0 67.0,236.0 75.0,245.0 84.0,257.0 94.0,265.0 104.0,269.0 117.0,271.0 130.0,275.0 144.0,282.0 154.0,284.0 164.0,284.0 172.0,282.0 175.6,278.8 188.6,265.8 201.6,252.9 214.5,243.2 222.0,237.3 232.0,226.5 242.0,218.2 252.0,210.7 262.0,204.9 271.0,202.4 276.8,204.0 285.3,209.1 293.6,214.0 301.9,217.4 310.2,219.0 320.2,224.9 330.2,229.8 342.0,236.5 350.3,239.8 356.9,241.5 365.2,240.7 375.2,238.2 387.0,234.0 403.6,229.0 420.2,224.9 430.2,223.3 436.8,222.4 447.0,224.1 452.0,225.7 461.9,229.9 471.9,234.0 481.9,239.0 491.8,244.9 502.0,250.7 507.0,253.1 516.9,259.8 525.2,263.1 535.2,260.6 545.2,258.1 552.0,257.8 567.0,251.1 582.0,244.4 596.9,238.4 607.0,234.7 617.0,226.4 626.9,219.8 636.9,217.3 646.9,215.6 662.0,215.2 677.0,214.4 688.9,213.7 700.9,217.4 711.4,220.4 722.0,224.2 740.0,229.8" fill="none" stroke="#2aa52a" stroke-width="1.1" stroke-linejoin="round" stroke-linecap="round" opacity="1" shape-rendering="crispEdges"/>
<rect x="59" y="257.0" width="1" height="28.0" fill="#000000"/>
<rect x="58" y="257.0" width="3" height="22.0" fill="#000000"/>
<rect x="64" y="265.5" width="1" height="20.5" fill="#ff0000"/>
<rect x="63" y="275.0" width="3" height="3.0" fill="#ff0000"/>
<rect x="69" y="269.0" width="1" height="19.0" fill="#000000"/>
<rect x="68" y="274.0" width="3" height="8.0" fill="#000000"/>
<rect x="74" y="280.5" width="1" height="23.5" fill="#000000"/>
<rect x="73" y="282.0" width="3" height="11.5" fill="#000000"/>
<rect x="79" y="292.0" width="1" height="18.0" fill="#ff0000"/>
<rect x="78" y="292.0" width="3" height="2.0" fill="#ff0000"/>
<rect x="84" y="291.0" width="1" height="21.0" fill="#ff0000"/>
<rect x="83" y="291.0" width="3" height="2.0" fill="#ff0000"/>
<rect x="89" y="282.0" width="1" height="14.0" fill="#000000"/>
<rect x="88" y="285.0" width="3" height="6.5" fill="#000000"/>
<rect x="94" y="277.0" width="1" height="15.0" fill="#ff0000"/>
<rect x="93" y="284.0" width="3" height="2.0" fill="#ff0000"/>
<rect x="99" y="284.0" width="1" height="23.0" fill="#000000"/>
<rect x="98" y="285.5" width="3" height="8.0" fill="#000000"/>
<rect x="104" y="288.0" width="1" height="12.0" fill="#ff0000"/>
<rect x="103" y="291.5" width="3" height="2.0" fill="#ff0000"/>
<rect x="109" y="277.5" width="1" height="15.5" fill="#ff0000"/>
<rect x="108" y="277.5" width="3" height="10.0" fill="#ff0000"/>
<rect x="114" y="277.5" width="1" height="11.5" fill="#000000"/>
<rect x="113" y="277.5" width="3" height="3.5" fill="#000000"/>
<rect x="119" y="277.0" width="1" height="23.0" fill="#000000"/>
<rect x="118" y="277.5" width="3" height="13.5" fill="#000000"/>
<rect x="124" y="286.0" width="1" height="14.0" fill="#ff0000"/>
<rect x="123" y="290.0" width="3" height="1.5" fill="#ff0000"/>
<rect x="129" y="277.5" width="1" height="19.5" fill="#ff0000"/>
<rect x="128" y="285.0" width="3" height="6.0" fill="#ff0000"/>
<rect x="134" y="280.5" width="1" height="10.5" fill="#000000"/>
<rect x="133" y="282.5" width="3" height="5.5" fill="#000000"/>
<rect x="139" y="284.0" width="1" height="11.0" fill="#ff0000"/>
<rect x="138" y="285.0" width="3" height="3.0" fill="#ff0000"/>
<rect x="144" y="273.0" width="1" height="21.0" fill="#ff0000"/>
<rect x="143" y="276.5" width="3" height="7.5" fill="#ff0000"/>
<rect x="149" y="269.5" width="1" height="13.5" fill="#000000"/>
<rect x="148" y="276.0" width="3" height="2.0" fill="#000000"/>
<rect x="154" y="272.5" width="1" height="15.5" fill="#ff0000"/>
<rect x="153" y="272.5" width="3" height="8.5" fill="#ff0000"/>
<rect x="159" y="270.5" width="1" height="11.5" fill="#000000"/>
<rect x="158" y="272.5" width="3" height="2.0" fill="#000000"/>
<rect x="164" y="276.0" width="1" height="8.0" fill="#ff0000"/>
<rect x="163" y="276.5" width="3" height="3.5" fill="#ff0000"/>
<rect x="169" y="263.0" width="1" height="18.5" fill="#ff0000"/>
<rect x="168" y="263.5" width="3" height="16.5" fill="#ff0000"/>
<rect x="174" y="232.5" width="1" height="36.5" fill="#ff0000"/>
<rect x="173" y="241.0" width="3" height="28.0" fill="#ff0000"/>
<rect x="179" y="170.0" width="1" height="76.0" fill="#ff0000"/>
<rect x="178" y="188.0" width="3" height="58.0" fill="#ff0000"/>
<rect x="184" y="170.5" width="1" height="25.0" fill="#ff0000"/>
<rect x="183" y="181.0" width="3" height="13.0" fill="#ff0000"/>
<rect x="189" y="169.0" width="1" height="16.0" fill="#ff0000"/>
<rect x="188" y="182.0" width="3" height="3.0" fill="#ff0000"/>
<rect x="194" y="181.5" width="1" height="15.5" fill="#000000"/>
<rect x="193" y="191.0" width="3" height="4.5" fill="#000000"/>
<rect x="199" y="191.5" width="1" height="22.5" fill="#ff0000"/>
<rect x="198" y="194.0" width="3" height="6.0" fill="#ff0000"/>
<rect x="204" y="197.5" width="1" height="27.5" fill="#000000"/>
<rect x="203" y="199.5" width="3" height="23.5" fill="#000000"/>
<rect x="209" y="199.0" width="1" height="32.0" fill="#ff0000"/>
<rect x="208" y="211.6" width="3" height="10.8" fill="#ff0000"/>
<rect x="214" y="196.6" width="1" height="17.4" fill="#ff0000"/>
<rect x="213" y="202.0" width="3" height="11.7" fill="#ff0000"/>
<rect x="219" y="194.5" width="1" height="19.5" fill="#ff0000"/>
<rect x="218" y="197.5" width="3" height="16.2" fill="#ff0000"/>
<rect x="224" y="181.2" width="1" height="20.8" fill="#ff0000"/>
<rect x="223" y="184.6" width="3" height="17.4" fill="#ff0000"/>
<rect x="229" y="185.0" width="1" height="27.0" fill="#000000"/>
<rect x="228" y="193.3" width="3" height="10.9" fill="#000000"/>
<rect x="234" y="197.5" width="1" height="12.5" fill="#ff0000"/>
<rect x="233" y="199.5" width="3" height="4.6" fill="#ff0000"/>
<rect x="239" y="189.0" width="1" height="18.8" fill="#ff0000"/>
<rect x="238" y="189.6" width="3" height="18.2" fill="#ff0000"/>
<rect x="244" y="188.0" width="1" height="14.9" fill="#ff0000"/>
<rect x="243" y="192.5" width="3" height="5.4" fill="#ff0000"/>
<rect x="249" y="190.4" width="1" height="13.7" fill="#ff0000"/>
<rect x="248" y="193.7" width="3" height="10.4" fill="#ff0000"/>
<rect x="254" y="192.5" width="1" height="9.0" fill="#ff0000"/>
<rect x="253" y="197.5" width="3" height="4.0" fill="#ff0000"/>
<rect x="259" y="198.0" width="1" height="23.5" fill="#000000"/>
<rect x="258" y="203.0" width="3" height="11.0" fill="#000000"/>
<rect x="264" y="209.0" width="1" height="15.0" fill="#ff0000"/>
<rect x="263" y="214.0" width="3" height="9.0" fill="#ff0000"/>
<rect x="269" y="225.5" width="1" height="26.5" fill="#000000"/>
<rect x="268" y="226.5" width="3" height="15.0" fill="#000000"/>
<rect x="274" y="238.0" width="1" height="17.5" fill="#ff0000"/>
<rect x="273" y="240.5" width="3" height="11.0" fill="#ff0000"/>
<rect x="279" y="236.5" width="1" height="16.5" fill="#ff0000"/>
<rect x="278" y="238.5" width="3" height="14.5" fill="#ff0000"/>
<rect x="284" y="239.0" width="1" height="11.5" fill="#000000"/>
<rect x="283" y="242.5" width="3" height="2.5" fill="#000000"/>
<rect x="289" y="245.5" width="1" height="13.5" fill="#ff0000"/>
<rect x="288" y="246.5" width="3" height="1.5" fill="#ff0000"/>
<rect x="294" y="241.5" width="1" height="14.0" fill="#ff0000"/>
<rect x="293" y="243.0" width="3" height="12.5" fill="#ff0000"/>
<rect x="299" y="240.5" width="1" height="13.5" fill="#ff0000"/>
<rect x="298" y="241.5" width="3" height="12.5" fill="#ff0000"/>
<rect x="304" y="240.0" width="1" height="11.5" fill="#ff0000"/>
<rect x="303" y="240.5" width="3" height="11.0" fill="#ff0000"/>
<rect x="309" y="237.5" width="1" height="14.0" fill="#ff0000"/>
<rect x="308" y="244.0" width="3" height="6.0" fill="#ff0000"/>
<rect x="314" y="240.5" width="1" height="15.0" fill="#ff0000"/>
<rect x="313" y="241.5" width="3" height="11.5" fill="#ff0000"/>
<rect x="319" y="241.5" width="1" height="11.5" fill="#ff0000"/>
<rect x="318" y="242.5" width="3" height="10.5" fill="#ff0000"/>
<rect x="324" y="241.5" width="1" height="11.0" fill="#ff0000"/>
<rect x="323" y="242.5" width="3" height="10.0" fill="#ff0000"/>
<rect x="329" y="243.0" width="1" height="20.0" fill="#000000"/>
<rect x="328" y="252.5" width="3" height="5.0" fill="#000000"/>
<rect x="334" y="258.0" width="1" height="17.5" fill="#ff0000"/>
<rect x="333" y="260.0" width="3" height="6.0" fill="#ff0000"/>
<rect x="339" y="251.5" width="1" height="19.5" fill="#ff0000"/>
<rect x="338" y="252.5" width="3" height="18.5" fill="#ff0000"/>
<rect x="344" y="236.0" width="1" height="24.0" fill="#ff0000"/>
<rect x="343" y="237.5" width="3" height="22.5" fill="#ff0000"/>
<rect x="349" y="236.5" width="1" height="9.5" fill="#ff0000"/>
<rect x="348" y="237.5" width="3" height="8.5" fill="#ff0000"/>
<rect x="354" y="217.5" width="1" height="28.5" fill="#ff0000"/>
<rect x="353" y="218.5" width="3" height="27.5" fill="#ff0000"/>
<rect x="359" y="209.5" width="1" height="49.5" fill="#ff0000"/>
<rect x="358" y="215.0" width="3" height="14.0" fill="#ff0000"/>
<rect x="364" y="214.0" width="1" height="39.0" fill="#ff0000"/>
<rect x="363" y="216.5" width="3" height="14.0" fill="#ff0000"/>
<rect x="369" y="215.0" width="1" height="17.5" fill="#ff0000"/>
<rect x="368" y="216.0" width="3" height="14.0" fill="#ff0000"/>
<rect x="374" y="216.0" width="1" height="10.5" fill="#ff0000"/>
<rect x="373" y="219.0" width="3" height="7.5" fill="#ff0000"/>
<rect x="379" y="217.5" width="1" height="12.5" fill="#ff0000"/>
<rect x="378" y="218.5" width="3" height="11.5" fill="#ff0000"/>
<rect x="384" y="212.5" width="1" height="11.5" fill="#ff0000"/>
<rect x="383" y="213.5" width="3" height="2.5" fill="#ff0000"/>
<rect x="389" y="213.5" width="1" height="10.5" fill="#ff0000"/>
<rect x="388" y="214.0" width="3" height="8.0" fill="#ff0000"/>
<rect x="394" y="201.0" width="1" height="23.0" fill="#ff0000"/>
<rect x="393" y="207.5" width="3" height="16.5" fill="#ff0000"/>
<rect x="400" y="209.0" width="1" height="13.5" fill="#ff0000"/>
<rect x="399" y="214.0" width="3" height="3.5" fill="#ff0000"/>
<rect x="405" y="212.5" width="1" height="15.0" fill="#ff0000"/>
<rect x="404" y="215.0" width="3" height="10.0" fill="#ff0000"/>
<rect x="410" y="211.0" width="1" height="14.0" fill="#ff0000"/>
<rect x="409" y="211.5" width="3" height="13.5" fill="#ff0000"/>
<rect x="415" y="212.5" width="1" height="13.0" fill="#ff0000"/>
<rect x="414" y="213.5" width="3" height="10.0" fill="#ff0000"/>
<rect x="420" y="213.5" width="1" height="10.0" fill="#ff0000"/>
<rect x="419" y="214.0" width="3" height="9.5" fill="#ff0000"/>
<rect x="425" y="218.0" width="1" height="10.0" fill="#ff0000"/>
<rect x="424" y="223.5" width="3" height="1.5" fill="#ff0000"/>
<rect x="430" y="230.0" width="1" height="25.0" fill="#000000"/>
<rect x="429" y="232.5" width="3" height="15.5" fill="#000000"/>
<rect x="435" y="245.5" width="1" height="20.0" fill="#000000"/>
<rect x="434" y="247.5" width="3" height="1.5" fill="#000000"/>
<rect x="440" y="245.5" width="1" height="15.0" fill="#000000"/>
<rect x="439" y="247.5" width="3" height="9.0" fill="#000000"/>
<rect x="445" y="251.0" width="1" height="14.0" fill="#ff0000"/>
<rect x="444" y="253.0" width="3" height="9.5" fill="#ff0000"/>
<rect x="450" y="253.0" width="1" height="11.0" fill="#ff0000"/>
<rect x="449" y="254.0" width="3" height="10.0" fill="#ff0000"/>
<rect x="455" y="258.0" width="1" height="11.0" fill="#ff0000"/>
<rect x="454" y="260.0" width="3" height="4.0" fill="#ff0000"/>
<rect x="460" y="257.5" width="1" height="8.0" fill="#ff0000"/>
<rect x="459" y="258.0" width="3" height="7.5" fill="#ff0000"/>
<rect x="465" y="257.5" width="1" height="10.5" fill="#ff0000"/>
<rect x="464" y="259.0" width="3" height="5.0" fill="#ff0000"/>
<rect x="470" y="260.5" width="1" height="17.0" fill="#000000"/>
<rect x="469" y="265.0" width="3" height="4.0" fill="#000000"/>
<rect x="475" y="260.5" width="1" height="21.0" fill="#ff0000"/>
<rect x="474" y="261.5" width="3" height="15.0" fill="#ff0000"/>
<rect x="480" y="265.0" width="1" height="7.5" fill="#000000"/>
<rect x="479" y="265.5" width="3" height="2.5" fill="#000000"/>
<rect x="485" y="265.5" width="1" height="10.0" fill="#ff0000"/>
<rect x="484" y="270.5" width="3" height="2.5" fill="#ff0000"/>
<rect x="490" y="268.0" width="1" height="9.5" fill="#ff0000"/>
<rect x="489" y="268.0" width="3" height="1.5" fill="#ff0000"/>
<rect x="495" y="267.5" width="1" height="8.0" fill="#000000"/>
<rect x="494" y="269.0" width="3" height="3.5" fill="#000000"/>
<rect x="500" y="269.5" width="1" height="6.5" fill="#ff0000"/>
<rect x="499" y="270.5" width="3" height="2.5" fill="#ff0000"/>
<rect x="505" y="268.0" width="1" height="8.5" fill="#ff0000"/>
<rect x="504" y="270.0" width="3" height="1.5" fill="#ff0000"/>
<rect x="510" y="267.5" width="1" height="12.0" fill="#000000"/>
<rect x="509" y="268.0" width="3" height="2.0" fill="#000000"/>
<rect x="515" y="270.0" width="1" height="13.0" fill="#000000"/>
<rect x="514" y="270.5" width="3" height="6.0" fill="#000000"/>
<rect x="520" y="271.5" width="1" height="11.5" fill="#ff0000"/>
<rect x="519" y="272.5" width="3" height="1.5" fill="#ff0000"/>
<rect x="525" y="261.5" width="1" height="20.0" fill="#ff0000"/>
<rect x="524" y="262.5" width="3" height="6.5" fill="#ff0000"/>
<rect x="530" y="232.5" width="1" height="27.5" fill="#ff0000"/>
<rect x="529" y="235.0" width="3" height="25.0" fill="#ff0000"/>
<rect x="535" y="229.0" width="1" height="19.0" fill="#ff0000"/>
<rect x="534" y="230.0" width="3" height="5.5" fill="#ff0000"/>
<rect x="540" y="228.0" width="1" height="17.5" fill="#000000"/>
<rect x="539" y="229.0" width="3" height="8.5" fill="#000000"/>
<rect x="545" y="232.5" width="1" height="7.5" fill="#000000"/>
<rect x="544" y="233.0" width="3" height="3.5" fill="#000000"/>
<rect x="550" y="229.0" width="1" height="10.0" fill="#000000"/>
<rect x="549" y="230.0" width="3" height="2.5" fill="#000000"/>
<rect x="555" y="225.0" width="1" height="12.0" fill="#000000"/>
<rect x="554" y="226.0" width="3" height="4.0" fill="#000000"/>
<rect x="560" y="219.0" width="1" height="16.5" fill="#ff0000"/>
<rect x="559" y="219.5" width="3" height="5.5" fill="#ff0000"/>
<rect x="565" y="217.5" width="1" height="11.0" fill="#000000"/>
<rect x="564" y="219.5" width="3" height="2.5" fill="#000000"/>
<rect x="570" y="215.0" width="1" height="8.5" fill="#000000"/>
<rect x="569" y="218.0" width="3" height="1.5" fill="#000000"/>
<rect x="575" y="206.0" width="1" height="14.5" fill="#000000"/>
<rect x="574" y="209.0" width="3" height="4.5" fill="#000000"/>
<rect x="580" y="213.0" width="1" height="12.0" fill="#000000"/>
<rect x="579" y="214.5" width="3" height="9.0" fill="#000000"/>
<rect x="585" y="219.0" width="1" height="24.0" fill="#000000"/>
<rect x="584" y="219.5" width="3" height="13.0" fill="#000000"/>
<rect x="590" y="231.5" width="1" height="19.5" fill="#000000"/>
<rect x="589" y="233.0" width="3" height="5.5" fill="#000000"/>
<rect x="595" y="226.5" width="1" height="30.0" fill="#ff0000"/>
<rect x="594" y="228.0" width="3" height="11.0" fill="#ff0000"/>
<rect x="600" y="209.0" width="1" height="21.0" fill="#ff0000"/>
<rect x="599" y="210.0" width="3" height="7.5" fill="#ff0000"/>
<rect x="605" y="206.0" width="1" height="22.0" fill="#000000"/>
<rect x="604" y="207.0" width="3" height="4.5" fill="#000000"/>
<rect x="610" y="204.0" width="1" height="17.0" fill="#ff0000"/>
<rect x="609" y="209.0" width="3" height="5.0" fill="#ff0000"/>
<rect x="615" y="208.0" width="1" height="29.0" fill="#000000"/>
<rect x="614" y="210.0" width="3" height="10.0" fill="#000000"/>
<rect x="620" y="157.5" width="1" height="74.0" fill="#ff0000"/>
<rect x="619" y="215.5" width="3" height="1.5" fill="#ff0000"/>
<rect x="625" y="195.0" width="1" height="30.0" fill="#ff0000"/>
<rect x="624" y="195.5" width="3" height="16.0" fill="#ff0000"/>
<rect x="630" y="189.0" width="1" height="26.0" fill="#000000"/>
<rect x="629" y="194.0" width="3" height="12.5" fill="#000000"/>
<rect x="635" y="193.0" width="1" height="21.0" fill="#ff0000"/>
<rect x="634" y="199.0" width="3" height="4.0" fill="#ff0000"/>
<rect x="640" y="192.5" width="1" height="30.5" fill="#000000"/>
<rect x="639" y="199.0" width="3" height="19.0" fill="#000000"/>
<rect x="645" y="212.5" width="1" height="15.5" fill="#ff0000"/>
<rect x="644" y="214.0" width="3" height="3.5" fill="#ff0000"/>
<rect x="650" y="212.5" width="1" height="10.5" fill="#000000"/>
<rect x="649" y="214.0" width="3" height="3.5" fill="#000000"/>
<rect x="655" y="205.0" width="1" height="18.0" fill="#ff0000"/>
<rect x="654" y="205.5" width="3" height="10.0" fill="#ff0000"/>
<rect x="660" y="209.0" width="1" height="12.5" fill="#000000"/>
<rect x="659" y="210.0" width="3" height="5.0" fill="#000000"/>
<rect x="665" y="209.5" width="1" height="10.0" fill="#ff0000"/>
<rect x="664" y="213.0" width="3" height="2.5" fill="#ff0000"/>
<rect x="670" y="205.5" width="1" height="14.0" fill="#ff0000"/>
<rect x="669" y="209.0" width="3" height="4.5" fill="#ff0000"/>
<rect x="675" y="209.0" width="1" height="13.0" fill="#000000"/>
<rect x="674" y="211.5" width="3" height="3.5" fill="#000000"/>
<rect x="680" y="213.5" width="1" height="19.0" fill="#000000"/>
<rect x="679" y="215.0" width="3" height="4.5" fill="#000000"/>
<rect x="685" y="219.0" width="1" height="18.5" fill="#000000"/>
<rect x="684" y="219.5" width="3" height="4.5" fill="#000000"/>
<rect x="690" y="225.5" width="1" height="13.5" fill="#000000"/>
<rect x="689" y="226.5" width="3" height="3.5" fill="#000000"/>
<rect x="695" y="231.5" width="1" height="14.5" fill="#000000"/>
<rect x="694" y="232.5" width="3" height="3.5" fill="#000000"/>
<rect x="700" y="234.5" width="1" height="25.5" fill="#000000"/>
<rect x="699" y="235.5" width="3" height="10.5" fill="#000000"/>
<rect x="705" y="241.5" width="1" height="16.5" fill="#000000"/>
<rect x="704" y="246.0" width="3" height="1.5" fill="#000000"/>
<rect x="710" y="246.0" width="1" height="12.0" fill="#000000"/>
<rect x="709" y="246.5" width="3" height="3.0" fill="#000000"/>
<rect x="715" y="246.5" width="1" height="10.5" fill="#ff0000"/>
<rect x="714" y="248.0" width="3" height="1.5" fill="#ff0000"/>
<rect x="720" y="246.0" width="1" height="9.0" fill="#ff0000"/>
<rect x="719" y="246.5" width="3" height="1.5" fill="#ff0000"/>
<rect x="725" y="243.5" width="1" height="10.0" fill="#ff0000"/>
<rect x="724" y="246.0" width="3" height="2.0" fill="#ff0000"/>
<rect x="730" y="235.5" width="1" height="10.0" fill="#ff0000"/>
<rect x="729" y="236.5" width="3" height="8.0" fill="#ff0000"/>
<rect x="735" y="235.5" width="1" height="14.0" fill="#ff0000"/>
<rect x="734" y="241.5" width="3" height="3.0" fill="#ff0000"/>
<rect x="740" y="231.5" width="1" height="11.0" fill="#000000"/>
<rect x="739" y="236.5" width="3" height="4.0" fill="#000000"/>
<polyline points="59.0,252.0 64.0,253.0 69.0,256.0 74.0,261.0 79.0,267.0 84.0,271.0 89.0,277.0 94.0,282.0 99.0,286.0 104.0,288.0 114.0,288.0 124.0,289.0 134.0,288.0 144.0,286.0 154.0,283.0 164.0,282.0 169.0,279.0 175.6,271.2 184.3,252.9 193.0,234.5 198.3,228.2 205.0,220.7 211.6,211.6 218.3,202.4 224.9,195.4 229.9,197.5 234.9,199.5 241.6,200.0 249.9,199.5 260.2,198.2 266.9,201.6 273.5,208.2 277.0,210.7 285.3,218.2 293.6,228.2 301.9,235.6 310.2,239.0 318.5,242.3 326.8,243.1 337.0,246.4 345.3,246.5 355.3,241.5 363.6,238.2 371.9,233.2 380.2,226.5 387.0,222.4 395.3,216.6 403.6,214.1 420.2,213.3 426.9,215.8 435.2,220.8 441.8,226.5 447.0,231.5 452.0,236.5 461.9,244.9 471.9,254.0 481.9,259.0 491.8,262.3 502.0,265.6 507.0,266.4 516.9,268.9 525.2,269.8 535.2,261.4 545.2,253.1 552.0,249.6 561.0,241.4 568.5,233.1 576.0,226.4 582.0,225.7 588.0,226.7 595.4,226.4 602.9,223.4 612.0,218.2 623.6,216.4 633.6,214.0 643.5,211.5 655.2,210.6 671.0,210.7 680.0,212.2 688.9,215.2 697.9,220.4 706.9,227.9 714.4,233.9 722.0,238.4 728.0,239.7 734.0,241.7 740.0,240.7" fill="none" stroke="#ff00ff" stroke-width="1.1" stroke-linejoin="round" stroke-linecap="round" opacity="1" shape-rendering="crispEdges"/>
<polyline points="59.0,252.0 69.0,265.0 79.0,284.0 84.0,287.0 89.0,290.0 94.0,291.0 104.0,291.0 109.0,287.0 114.0,285.0 124.0,287.0 134.0,288.0 139.0,289.0 144.0,285.0 149.0,282.0 154.0,280.0 164.0,276.0 169.0,272.0 174.0,265.0 179.0,250.0 184.0,230.0 189.0,212.0 194.0,192.0 199.2,188.3 204.1,193.3 210.8,202.4 216.6,204.9 221.6,205.4 225.8,202.9 229.1,200.4 234.1,198.3 239.1,195.0 244.0,193.7 249.9,196.6 254.4,195.7 260.2,199.9 265.2,206.5 271.8,218.2 278.5,231.5 283.6,235.6 289.5,242.3 293.6,243.6 310.2,243.6 315.2,242.3 325.2,242.8 330.2,246.4 339.5,251.4 348.6,247.3 355.3,236.5 361.9,226.5 370.2,219.9 376.8,217.4 385.2,216.6 392.0,216.0 397.0,213.3 406.9,212.4 420.2,213.3 425.2,214.9 430.2,221.6 435.2,229.9 440.2,238.2 447.0,248.1 450.3,253.2 458.6,256.5 466.9,259.0 475.2,262.3 483.5,264.8 490.2,267.8 502.0,268.9 515.3,270.6 525.2,269.8 530.2,263.1 538.5,249.8 545.2,239.9 550.2,233.2 557.0,231.5 561.0,230.1 570.0,224.9 579.7,219.7 586.4,223.4 593.9,227.2 601.4,224.9 607.0,218.9 613.6,215.6 623.6,212.3 633.6,209.0 643.5,206.5 646.9,207.3 651.9,211.5 662.0,214.0 669.5,213.4 675.5,211.4 684.5,215.9 691.9,221.9 699.4,229.4 705.4,236.1 712.9,244.4 717.4,247.4 722.0,248.1 726.0,247.7 732.0,245.3 740.0,242.7" fill="none" stroke="#0000ff" stroke-width="1.1" stroke-linejoin="round" stroke-linecap="round" opacity="1" shape-rendering="crispEdges"/>
</g>
<g clip-path="url(#clip1)">
<rect x="58" y="409.4" width="2" height="5.1" fill="#0000ff"/>
<rect x="63" y="412.0" width="2" height="2.5" fill="#0000ff"/>
<rect x="68" y="412.0" width="2" height="2.5" fill="#0000ff"/>
<rect x="73" y="412.5" width="2" height="2.0" fill="#0000ff"/>
<rect x="78" y="412.5" width="2" height="2.0" fill="#0000ff"/>
<rect x="83" y="412.5" width="2" height="2.0" fill="#0000ff"/>
<rect x="88" y="412.5" width="2" height="2.0" fill="#0000ff"/>
<rect x="93" y="412.0" width="2" height="2.5" fill="#0000ff"/>
<rect x="98" y="412.0" width="2" height="2.5" fill="#0000ff"/>
<rect x="103" y="410.4" width="2" height="4.1" fill="#0000ff"/>
<rect x="108" y="408.5" width="2" height="6.0" fill="#0000ff"/>
<rect x="113" y="406.5" width="2" height="8.0" fill="#0000ff"/>
<rect x="118" y="406.5" width="2" height="8.0" fill="#0000ff"/>
<rect x="123" y="406.5" width="2" height="8.0" fill="#0000ff"/>
<rect x="128" y="406.5" width="2" height="8.0" fill="#0000ff"/>
<rect x="133" y="406.5" width="2" height="8.0" fill="#0000ff"/>
<rect x="138" y="405.6" width="2" height="8.9" fill="#0000ff"/>
<rect x="143" y="405.6" width="2" height="8.9" fill="#0000ff"/>
<rect x="148" y="404.6" width="2" height="9.9" fill="#0000ff"/>
<rect x="153" y="404.6" width="2" height="9.9" fill="#0000ff"/>
<rect x="158" y="403.6" width="2" height="10.9" fill="#0000ff"/>
<rect x="163" y="404.6" width="2" height="9.9" fill="#0000ff"/>
<rect x="168" y="403.6" width="2" height="10.9" fill="#0000ff"/>
<rect x="173" y="401.7" width="2" height="12.8" fill="#0000ff"/>
<rect x="178" y="394.6" width="2" height="19.9" fill="#0000ff"/>
<rect x="183" y="389.6" width="2" height="24.9" fill="#0000ff"/>
<rect x="188" y="387.3" width="2" height="27.2" fill="#0000ff"/>
<rect x="193" y="388.8" width="2" height="25.7" fill="#0000ff"/>
<rect x="198" y="391.1" width="2" height="23.4" fill="#0000ff"/>
<rect x="203" y="396.5" width="2" height="18.0" fill="#0000ff"/>
<rect x="208" y="400.8" width="2" height="13.7" fill="#0000ff"/>
<rect x="213" y="402.7" width="2" height="11.8" fill="#0000ff"/>
<rect x="218" y="404.6" width="2" height="9.9" fill="#0000ff"/>
<rect x="223" y="404.6" width="2" height="9.9" fill="#0000ff"/>
<rect x="228" y="407.5" width="2" height="7.0" fill="#0000ff"/>
<rect x="233" y="409.4" width="2" height="5.1" fill="#0000ff"/>
<rect x="238" y="410.8" width="2" height="3.7" fill="#0000ff"/>
<rect x="243" y="412.3" width="2" height="2.2" fill="#0000ff"/>
<rect x="248" y="412.5" width="2" height="2.0" fill="#0000ff"/>
<rect x="253" y="412.5" width="2" height="2.0" fill="#0000ff"/>
<rect x="258" y="414.5" width="2" height="2.0" fill="#0000ff"/>
<rect x="263" y="414.5" width="2" height="4.0" fill="#0000ff"/>
<rect x="268" y="414.5" width="2" height="9.0" fill="#0000ff"/>
<rect x="273" y="414.5" width="2" height="11.3" fill="#0000ff"/>
<rect x="278" y="414.5" width="2" height="13.2" fill="#0000ff"/>
<rect x="283" y="414.5" width="2" height="12.8" fill="#0000ff"/>
<rect x="288" y="414.5" width="2" height="12.8" fill="#0000ff"/>
<rect x="293" y="414.5" width="2" height="11.3" fill="#0000ff"/>
<rect x="298" y="414.5" width="2" height="10.9" fill="#0000ff"/>
<rect x="303" y="414.5" width="2" height="9.0" fill="#0000ff"/>
<rect x="308" y="414.5" width="2" height="7.1" fill="#0000ff"/>
<rect x="313" y="414.5" width="2" height="6.5" fill="#0000ff"/>
<rect x="318" y="414.5" width="2" height="5.5" fill="#0000ff"/>
<rect x="323" y="414.5" width="2" height="5.1" fill="#0000ff"/>
<rect x="328" y="414.5" width="2" height="5.1" fill="#0000ff"/>
<rect x="333" y="414.5" width="2" height="5.9" fill="#0000ff"/>
<rect x="338" y="414.5" width="2" height="4.5" fill="#0000ff"/>
<rect x="343" y="414.5" width="2" height="2.0" fill="#0000ff"/>
<rect x="348" y="412.5" width="2" height="2.0" fill="#0000ff"/>
<rect x="353" y="412.3" width="2" height="2.2" fill="#0000ff"/>
<rect x="358" y="409.4" width="2" height="5.1" fill="#0000ff"/>
<rect x="363" y="408.5" width="2" height="6.0" fill="#0000ff"/>
<rect x="368" y="407.5" width="2" height="7.0" fill="#0000ff"/>
<rect x="373" y="407.5" width="2" height="7.0" fill="#0000ff"/>
<rect x="378" y="407.5" width="2" height="7.0" fill="#0000ff"/>
<rect x="383" y="406.5" width="2" height="8.0" fill="#0000ff"/>
<rect x="388" y="407.5" width="2" height="7.0" fill="#0000ff"/>
<rect x="393" y="407.5" width="2" height="7.0" fill="#0000ff"/>
<rect x="399" y="409.4" width="2" height="5.1" fill="#0000ff"/>
<rect x="404" y="410.4" width="2" height="4.1" fill="#0000ff"/>
<rect x="409" y="411.4" width="2" height="3.1" fill="#0000ff"/>
<rect x="414" y="412.3" width="2" height="2.2" fill="#0000ff"/>
<rect x="419" y="412.3" width="2" height="2.2" fill="#0000ff"/>
<rect x="424" y="412.5" width="2" height="2.0" fill="#0000ff"/>
<rect x="429" y="414.5" width="2" height="2.0" fill="#0000ff"/>
<rect x="434" y="414.5" width="2" height="5.1" fill="#0000ff"/>
<rect x="439" y="414.5" width="2" height="6.5" fill="#0000ff"/>
<rect x="444" y="414.5" width="2" height="7.8" fill="#0000ff"/>
<rect x="449" y="414.5" width="2" height="7.8" fill="#0000ff"/>
<rect x="454" y="414.5" width="2" height="7.8" fill="#0000ff"/>
<rect x="459" y="414.5" width="2" height="7.5" fill="#0000ff"/>
<rect x="464" y="414.5" width="2" height="6.5" fill="#0000ff"/>
<rect x="469" y="414.5" width="2" height="6.5" fill="#0000ff"/>
<rect x="474" y="414.5" width="2" height="5.9" fill="#0000ff"/>
<rect x="479" y="414.5" width="2" height="5.1" fill="#0000ff"/>
<rect x="484" y="414.5" width="2" height="4.5" fill="#0000ff"/>
<rect x="489" y="414.5" width="2" height="4.0" fill="#0000ff"/>
<rect x="494" y="414.5" width="2" height="3.6" fill="#0000ff"/>
<rect x="499" y="414.5" width="2" height="2.6" fill="#0000ff"/>
<rect x="504" y="414.5" width="2" height="2.0" fill="#0000ff"/>
<rect x="509" y="414.5" width="2" height="2.0" fill="#0000ff"/>
<rect x="514" y="414.5" width="2" height="2.0" fill="#0000ff"/>
<rect x="519" y="414.5" width="2" height="2.0" fill="#0000ff"/>
<rect x="524" y="412.5" width="2" height="2.0" fill="#0000ff"/>
<rect x="529" y="409.4" width="2" height="5.1" fill="#0000ff"/>
<rect x="534" y="406.5" width="2" height="8.0" fill="#0000ff"/>
<rect x="539" y="404.6" width="2" height="9.9" fill="#0000ff"/>
<rect x="544" y="404.6" width="2" height="9.9" fill="#0000ff"/>
<rect x="549" y="403.6" width="2" height="10.9" fill="#0000ff"/>
<rect x="554" y="403.6" width="2" height="10.9" fill="#0000ff"/>
<rect x="559" y="403.6" width="2" height="10.9" fill="#0000ff"/>
<rect x="564" y="403.6" width="2" height="10.9" fill="#0000ff"/>
<rect x="569" y="404.6" width="2" height="9.9" fill="#0000ff"/>
<rect x="574" y="404.6" width="2" height="9.9" fill="#0000ff"/>
<rect x="579" y="405.6" width="2" height="8.9" fill="#0000ff"/>
<rect x="584" y="408.5" width="2" height="6.0" fill="#0000ff"/>
<rect x="589" y="412.0" width="2" height="2.5" fill="#0000ff"/>
<rect x="594" y="412.5" width="2" height="2.0" fill="#0000ff"/>
<rect x="599" y="412.0" width="2" height="2.5" fill="#0000ff"/>
<rect x="604" y="412.0" width="2" height="2.5" fill="#0000ff"/>
<rect x="609" y="410.8" width="2" height="3.7" fill="#0000ff"/>
<rect x="614" y="412.0" width="2" height="2.5" fill="#0000ff"/>
<rect x="619" y="410.8" width="2" height="3.7" fill="#0000ff"/>
<rect x="624" y="410.8" width="2" height="3.7" fill="#0000ff"/>
<rect x="629" y="410.8" width="2" height="3.7" fill="#0000ff"/>
<rect x="634" y="410.8" width="2" height="3.7" fill="#0000ff"/>
<rect x="639" y="412.5" width="2" height="2.0" fill="#0000ff"/>
<rect x="644" y="412.5" width="2" height="2.0" fill="#0000ff"/>
<rect x="649" y="414.5" width="2" height="2.0" fill="#0000ff"/>
<rect x="654" y="414.5" width="2" height="2.0" fill="#0000ff"/>
<rect x="659" y="414.5" width="2" height="2.0" fill="#0000ff"/>
<rect x="664" y="414.5" width="2" height="2.0" fill="#0000ff"/>
<rect x="669" y="414.5" width="2" height="2.0" fill="#0000ff"/>
<rect x="674" y="414.5" width="2" height="2.0" fill="#0000ff"/>
<rect x="679" y="414.5" width="2" height="3.0" fill="#0000ff"/>
<rect x="684" y="414.5" width="2" height="3.7" fill="#0000ff"/>
<rect x="689" y="414.5" width="2" height="4.8" fill="#0000ff"/>
<rect x="694" y="414.5" width="2" height="5.8" fill="#0000ff"/>
<rect x="699" y="414.5" width="2" height="7.6" fill="#0000ff"/>
<rect x="704" y="414.5" width="2" height="8.6" fill="#0000ff"/>
<rect x="709" y="414.5" width="2" height="8.6" fill="#0000ff"/>
<rect x="714" y="414.5" width="2" height="7.9" fill="#0000ff"/>
<rect x="719" y="414.5" width="2" height="7.2" fill="#0000ff"/>
<rect x="724" y="414.5" width="2" height="6.5" fill="#0000ff"/>
<rect x="729" y="414.5" width="2" height="3.7" fill="#0000ff"/>
<rect x="734" y="414.5" width="2" height="2.3" fill="#0000ff"/>
<rect x="739" y="414.5" width="2" height="2.0" fill="#0000ff"/>
<polyline points="58.9,466.3 70.5,466.7 74.3,468.6 87.8,468.2 95.5,465.3 105.2,461.4 114.8,456.2 124.4,452.2 134.1,448.9 143.7,444.1 153.3,437.4 161.0,433.1 168.8,429.7 174.5,423.9 179.4,412.3 184.2,400.8 190.0,389.2 195.7,384.4 200.5,382.5 209.2,385.3 217.0,383.4 224.5,380.9 233.2,382.8 242.8,383.4 256.3,386.3 264.0,392.1 275.6,405.6 289.1,415.2 298.7,420.0 312.2,422.9 323.8,423.9 339.2,428.1 350.7,422.9 360.4,416.2 367.0,414.2 378.6,409.4 394.0,403.6 422.9,403.6 428.7,406.5 436.4,414.2 444.1,420.0 455.6,424.8 471.0,430.0 482.6,432.5 501.9,433.5 517.3,433.1 522.0,432.5 527.8,427.7 535.5,419.1 547.0,412.3 560.5,405.6 576.0,397.9 581.7,397.9 595.2,402.3 608.7,397.9 616.4,398.8 626.0,395.9 635.7,394.0 643.4,397.3 656.9,399.2 672.3,402.3 679.0,404.5 686.0,407.1 694.3,411.2 699.9,416.1 708.3,420.3 719.4,424.9 732.0,424.9 740.3,423.1" fill="none" stroke="#22a822" stroke-width="1.05" stroke-linejoin="round" stroke-linecap="round" opacity="1" shape-rendering="crispEdges"/>
<polyline points="58.9,470.1 68.6,468.6 78.2,469.2 89.8,468.6 107.1,465.3 124.4,459.5 143.7,450.9 157.2,444.1 172.6,437.4 182.2,427.7 191.9,415.2 199.6,405.6 209.2,397.9 217.0,393.0 231.3,388.2 246.7,385.7 260.2,386.3 273.7,392.1 289.1,402.7 304.5,411.4 316.0,417.1 327.6,420.0 339.2,423.3 352.7,422.9 367.0,419.0 378.6,416.2 390.1,411.9 405.5,408.1 424.8,405.6 436.4,408.5 451.8,414.2 465.3,421.0 478.8,425.8 494.2,429.3 505.7,431.2 522.0,431.2 529.7,430.6 541.3,424.8 556.7,417.7 570.2,411.4 579.8,406.1 595.2,403.6 610.6,401.1 626.0,398.4 641.5,396.5 656.9,397.9 672.3,399.4 677.6,400.8 686.0,402.2 695.7,405.0 705.5,409.8 715.2,414.0 725.0,418.2 733.4,419.9 740.3,421.3" fill="none" stroke="#ff2a2a" stroke-width="1.05" stroke-linejoin="round" stroke-linecap="round" opacity="1" shape-rendering="crispEdges"/>
</g>
<g clip-path="url(#clip2)">
<polyline points="59.1,571.1 68.4,591.3 75.0,600.0 88.0,600.0 92.3,590.2 100.7,587.7 106.9,578.8 114.2,550.3 123.5,554.3 129.8,548.2 135.0,551.2 140.2,546.6 144.3,539.3 149.5,537.2 153.7,532.7 159.9,530.0 164.1,531.4 169.3,523.7 173.4,522.3 178.6,523.3 183.8,521.0 189.0,521.2 194.2,524.1 199.4,526.2 205.6,538.3 209.8,543.0 215.0,543.0 219.2,545.1 225.0,542.0 229.6,552.4 234.8,549.7 240.0,542.4 249.3,540.8 253.5,546.6 255.1,548.7 259.3,565.3 264.5,575.7 269.7,586.1 273.8,591.3 280.0,600.0 298.0,600.0 302.9,591.3 309.2,584.0 314.4,566.3 318.5,559.5 324.3,554.5 328.9,565.3 334.1,569.9 339.3,563.2 344.5,546.6 349.7,536.2 354.9,525.4 360.1,523.3 368.4,522.0 378.8,524.1 387.1,520.6 395.4,520.6 401.7,524.8 410.0,534.1 418.3,545.5 424.6,565.3 430.8,580.9 436.0,585.0 441.2,591.3 446.0,600.0 470.0,600.0 473.0,591.3 476.1,585.0 483.4,582.3 490.7,580.9 500.0,576.7 505.2,570.5 510.4,568.0 516.6,571.5 520.8,569.5 526.0,548.7 535.4,527.5 541.6,524.8 551.0,520.6 560.3,515.0 570.7,515.0 574.9,517.9 581.1,534.1 590.5,565.3 595.0,561.5 599.8,548.7 605.0,538.3 610.2,531.0 616.4,537.2 619.6,547.6 623.7,549.7 630.0,554.9 635.0,556.6 641.0,569.3 650.7,581.3 655.2,579.0 660.4,585.8 664.9,583.5 670.1,578.3 676.1,579.8 680.6,582.0 685.1,579.8 690.3,582.8 697.8,588.0 705.3,591.5 710.0,600.0 722.0,600.0 724.7,591.5 730.0,575.3 735.2,561.1 740.4,553.2" fill="none" stroke="#22a822" stroke-width="1.05" stroke-linejoin="round" stroke-linecap="round" opacity="1" shape-rendering="crispEdges"/>
<polyline points="59.1,565.3 67.4,574.6 75.7,584.0 84.0,590.2 90.3,591.3 98.6,590.2 104.8,587.1 111.1,577.8 119.4,564.3 129.8,557.0 140.2,551.2 150.6,544.5 161.0,536.2 171.3,530.0 181.7,525.8 191.1,523.3 202.5,528.3 210.8,536.2 221.2,540.3 229.6,543.5 235.8,546.2 244.1,544.1 250.3,543.5 252.0,544.1 258.2,551.8 266.6,564.3 274.9,577.8 283.2,586.1 290.5,591.3 296.0,600.0 304.0,600.0 307.1,591.3 314.4,581.9 323.7,568.4 330.0,567.0 337.2,567.4 343.5,559.1 353.9,543.5 365.3,531.0 376.7,525.8 387.1,523.3 395.4,522.0 407.9,525.8 420.4,538.3 432.9,565.3 441.2,576.7 447.0,584.0 457.4,591.3 462.0,600.0 474.0,600.0 478.2,591.3 488.6,586.1 501.1,580.9 509.4,574.6 519.8,571.9 526.0,563.2 534.3,546.6 544.7,533.1 555.1,524.8 565.5,519.1 573.8,517.9 582.1,525.8 590.5,543.5 595.6,549.1 602.9,545.5 611.2,540.3 615.4,539.3 623.7,544.5 634.1,550.7 642.5,558.8 649.2,568.6 654.4,571.6 660.4,576.8 664.9,579.0 676.9,579.0 681.4,580.5 685.1,579.0 691.8,582.0 706.8,587.3 716.5,591.5 720.0,600.0 722.0,600.0 725.5,591.5 731.5,586.5 740.4,570.1" fill="none" stroke="#ff2a2a" stroke-width="1.05" stroke-linejoin="round" stroke-linecap="round" opacity="1" shape-rendering="crispEdges"/>
</g>
<text transform="translate(59.66,33.2) scale(0.840,1)" text-anchor="middle" font-family='"Liberation Sans", sans-serif' font-size="14.00" font-weight="normal" fill="#fff">2</text>
<text transform="translate(66.58,33.2) scale(0.840,1)" text-anchor="middle" font-family='"Liberation Sans", sans-serif' font-size="14.00" font-weight="normal" fill="#fff">0</text>
<text transform="translate(73.50,33.2) scale(0.840,1)" text-anchor="middle" font-family='"Liberation Sans", sans-serif' font-size="14.00" font-weight="normal" fill="#fff">1</text>
<text transform="translate(80.42,33.2) scale(0.840,1)" text-anchor="middle" font-family='"Liberation Sans", sans-serif' font-size="14.00" font-weight="normal" fill="#fff">1</text>
<text transform="translate(87.34,33.2) scale(0.840,1)" text-anchor="middle" font-family='"Liberation Sans", sans-serif' font-size="14.00" font-weight="normal" fill="#fff">/</text>
<text transform="translate(94.26,33.2) scale(0.840,1)" text-anchor="middle" font-family='"Liberation Sans", sans-serif' font-size="14.00" font-weight="normal" fill="#fff">0</text>
<text transform="translate(101.18,33.2) scale(0.840,1)" text-anchor="middle" font-family='"Liberation Sans", sans-serif' font-size="14.00" font-weight="normal" fill="#fff">4</text>
<text transform="translate(108.10,33.2) scale(0.840,1)" text-anchor="middle" font-family='"Liberation Sans", sans-serif' font-size="14.00" font-weight="normal" fill="#fff">/</text>
<text transform="translate(115.02,33.2) scale(0.840,1)" text-anchor="middle" font-family='"Liberation Sans", sans-serif' font-size="14.00" font-weight="normal" fill="#fff">0</text>
<text transform="translate(121.94,33.2) scale(0.840,1)" text-anchor="middle" font-family='"Liberation Sans", sans-serif' font-size="14.00" font-weight="normal" fill="#fff">6</text>
<path transform="translate(134.5,22.5) scale(1.0)" d="M1,12V1H5V5H1M1,3H5M11,12V1H7V5H11M7,3H11M3,7.5H9M2.5,9.8H9.5M4.5,7.5Q4.5,11 3,12M7.5,7.5V12" fill="none" stroke="#fff" stroke-width="1.000" stroke-linecap="square" shape-rendering="crispEdges"/>
<text transform="translate(156.54,33.2) scale(0.840,1)" text-anchor="middle" font-family='"Liberation Sans", sans-serif' font-size="14.00" font-weight="normal" fill="#fff">2</text>
<text transform="translate(163.46,33.2) scale(0.840,1)" text-anchor="middle" font-family='"Liberation Sans", sans-serif' font-size="14.00" font-weight="normal" fill="#fff">9</text>
<text transform="translate(170.38,33.2) scale(0.840,1)" text-anchor="middle" font-family='"Liberation Sans", sans-serif' font-size="14.00" font-weight="normal" fill="#fff">.</text>
<text transform="translate(177.30,33.2) scale(0.840,1)" text-anchor="middle" font-family='"Liberation Sans", sans-serif' font-size="14.00" font-weight="normal" fill="#fff">3</text>
<text transform="translate(184.22,33.2) scale(0.840,1)" text-anchor="middle" font-family='"Liberation Sans", sans-serif' font-size="14.00" font-weight="normal" fill="#fff">2</text>
<path transform="translate(196.5,22.5) scale(1.0)" d="M6,0V1.8M0.8,2H11.2M4,3.6H8V5.6H4ZM1.5,12V7H10.5V12M4,8.6H8V10.6H4Z" fill="none" stroke="#fff" stroke-width="1.000" stroke-linecap="square" shape-rendering="crispEdges"/>
<text transform="translate(218.82,33.2) scale(0.840,1)" text-anchor="middle" font-family='"Liberation Sans", sans-serif' font-size="14.00" font-weight="normal" fill="#fff">2</text>
<text transform="translate(225.74,33.2) scale(0.840,1)" text-anchor="middle" font-family='"Liberation Sans", sans-serif' font-size="14.00" font-weight="normal" fill="#fff">9</text>
<text transform="translate(232.66,33.2) scale(0.840,1)" text-anchor="middle" font-family='"Liberation Sans", sans-serif' font-size="14.00" font-weight="normal" fill="#fff">.</text>
<text transform="translate(239.58,33.2) scale(0.840,1)" text-anchor="middle" font-family='"Liberation Sans", sans-serif' font-size="14.00" font-weight="normal" fill="#fff">3</text>
<text transform="translate(246.50,33.2) scale(0.840,1)" text-anchor="middle" font-family='"Liberation Sans", sans-serif' font-size="14.00" font-weight="normal" fill="#fff">2</text>
<path transform="translate(258.5,22.5) scale(1.0)" d="M3,0L1,4M2,3V12M5,1.5L11,0.5M5.5,1.5V9.5L8,8.5M5.5,5H11.5M8,5Q9,9.5 11.5,11M4.5,11.5H10" fill="none" stroke="#fff" stroke-width="1.000" stroke-linecap="square" shape-rendering="crispEdges"/>
<text transform="translate(281.10,33.2) scale(0.840,1)" text-anchor="middle" font-family='"Liberation Sans", sans-serif' font-size="14.00" font-weight="normal" fill="#fff">2</text>
<text transform="translate(288.02,33.2) scale(0.840,1)" text-anchor="middle" font-family='"Liberation Sans", sans-serif' font-size="14.00" font-weight="normal" fill="#fff">8</text>
<text transform="translate(294.94,33.2) scale(0.840,1)" text-anchor="middle" font-family='"Liberation Sans", sans-serif' font-size="14.00" font-weight="normal" fill="#fff">.</text>
<text transform="translate(301.86,33.2) scale(0.840,1)" text-anchor="middle" font-family='"Liberation Sans", sans-serif' font-size="14.00" font-weight="normal" fill="#fff">9</text>
<text transform="translate(308.78,33.2) scale(0.840,1)" text-anchor="middle" font-family='"Liberation Sans", sans-serif' font-size="14.00" font-weight="normal" fill="#fff">0</text>
<text transform="translate(315.70,33.2) scale(0.840,1)" text-anchor="middle" font-family='"Liberation Sans", sans-serif' font-size="14.00" font-weight="normal" fill="#fff">3</text>
<path transform="translate(328.5,22.5) scale(1.0)" d="M1.5,2V9L4.5,7.5M4.5,0.5V12M7,0.5L6,4M6.5,3H11.5M10.5,3Q9,9 6,12M7,6Q9,10 11.5,12" fill="none" stroke="#fff" stroke-width="1.000" stroke-linecap="square" shape-rendering="crispEdges"/>
<text transform="translate(350.30,33.2) scale(0.840,1)" text-anchor="middle" font-family='"Liberation Sans", sans-serif' font-size="14.00" font-weight="normal" fill="#fff">2</text>
<text transform="translate(357.22,33.2) scale(0.840,1)" text-anchor="middle" font-family='"Liberation Sans", sans-serif' font-size="14.00" font-weight="normal" fill="#fff">8</text>
<text transform="translate(364.14,33.2) scale(0.840,1)" text-anchor="middle" font-family='"Liberation Sans", sans-serif' font-size="14.00" font-weight="normal" fill="#fff">.</text>
<text transform="translate(371.06,33.2) scale(0.840,1)" text-anchor="middle" font-family='"Liberation Sans", sans-serif' font-size="14.00" font-weight="normal" fill="#fff">9</text>
<text transform="translate(377.98,33.2) scale(0.840,1)" text-anchor="middle" font-family='"Liberation Sans", sans-serif' font-size="14.00" font-weight="normal" fill="#fff">9</text>
<text transform="translate(384.90,33.2) scale(0.840,1)" text-anchor="middle" font-family='"Liberation Sans", sans-serif' font-size="14.00" font-weight="normal" fill="#fff">1</text>
<text transform="translate(398.74,33.2) scale(0.840,1)" text-anchor="middle" font-family='"Liberation Sans", sans-serif' font-size="14.00" font-weight="normal" fill="#fff">-</text>
<text transform="translate(405.66,33.2) scale(0.840,1)" text-anchor="middle" font-family='"Liberation Sans", sans-serif' font-size="14.00" font-weight="normal" fill="#fff">0</text>
<text transform="translate(412.58,33.2) scale(0.840,1)" text-anchor="middle" font-family='"Liberation Sans", sans-serif' font-size="14.00" font-weight="normal" fill="#fff">.</text>
<text transform="translate(419.50,33.2) scale(0.840,1)" text-anchor="middle" font-family='"Liberation Sans", sans-serif' font-size="14.00" font-weight="normal" fill="#fff">3</text>
<text transform="translate(426.42,33.2) scale(0.840,1)" text-anchor="middle" font-family='"Liberation Sans", sans-serif' font-size="14.00" font-weight="normal" fill="#fff">2</text>
<text transform="translate(433.34,33.2) scale(0.840,1)" text-anchor="middle" font-family='"Liberation Sans", sans-serif' font-size="14.00" font-weight="normal" fill="#fff">(</text>
<text transform="translate(440.26,33.2) scale(0.840,1)" text-anchor="middle" font-family='"Liberation Sans", sans-serif' font-size="14.00" font-weight="normal" fill="#fff">-</text>
<text transform="translate(447.18,33.2) scale(0.840,1)" text-anchor="middle" font-family='"Liberation Sans", sans-serif' font-size="14.00" font-weight="normal" fill="#fff">1</text>
<text transform="translate(454.10,33.2) scale(0.840,1)" text-anchor="middle" font-family='"Liberation Sans", sans-serif' font-size="14.00" font-weight="normal" fill="#fff">.</text>
<text transform="translate(461.02,33.2) scale(0.840,1)" text-anchor="middle" font-family='"Liberation Sans", sans-serif' font-size="14.00" font-weight="normal" fill="#fff">1</text>
<text transform="translate(467.94,33.2) scale(0.840,1)" text-anchor="middle" font-family='"Liberation Sans", sans-serif' font-size="14.00" font-weight="normal" fill="#fff">2</text>
<text transform="translate(474.86,33.2) scale(0.840,1)" text-anchor="middle" font-family='"Liberation Sans", sans-serif' font-size="14.00" font-weight="normal" fill="#fff">%</text>
<text transform="translate(481.78,33.2) scale(0.840,1)" text-anchor="middle" font-family='"Liberation Sans", sans-serif' font-size="14.00" font-weight="normal" fill="#fff">)</text>
<text transform="translate(67.46,51.3) scale(0.500,1)" text-anchor="middle" font-family='"Liberation Serif", serif' font-size="14.85" font-weight="normal" fill="#fff">M</text>
<text transform="translate(74.38,51.3) scale(0.616,1)" text-anchor="middle" font-family='"Liberation Serif", serif' font-size="14.85" font-weight="normal" fill="#fff">A</text>
<text transform="translate(81.30,51.3) scale(0.840,1)" text-anchor="middle" font-family='"Liberation Sans", sans-serif' font-size="13.50" font-weight="normal" fill="#fff">5</text>
<text transform="translate(95.14,51.3) scale(0.840,1)" text-anchor="middle" font-family='"Liberation Sans", sans-serif' font-size="13.50" font-weight="normal" fill="#fff">2</text>
<text transform="translate(102.06,51.3) scale(0.840,1)" text-anchor="middle" font-family='"Liberation Sans", sans-serif' font-size="13.50" font-weight="normal" fill="#fff">9</text>
<text transform="translate(108.98,51.3) scale(0.840,1)" text-anchor="middle" font-family='"Liberation Sans", sans-serif' font-size="13.50" font-weight="normal" fill="#fff">.</text>
<text transform="translate(115.90,51.3) scale(0.840,1)" text-anchor="middle" font-family='"Liberation Sans", sans-serif' font-size="13.50" font-weight="normal" fill="#fff">3</text>
<text transform="translate(122.82,51.3) scale(0.840,1)" text-anchor="middle" font-family='"Liberation Sans", sans-serif' font-size="13.50" font-weight="normal" fill="#fff">9</text>
<text transform="translate(143.58,51.3) scale(0.500,1)" text-anchor="middle" font-family='"Liberation Serif", serif' font-size="14.85" font-weight="normal" fill="#fff">M</text>
<text transform="translate(150.50,51.3) scale(0.616,1)" text-anchor="middle" font-family='"Liberation Serif", serif' font-size="14.85" font-weight="normal" fill="#fff">A</text>
<text transform="translate(157.42,51.3) scale(0.840,1)" text-anchor="middle" font-family='"Liberation Sans", sans-serif' font-size="13.50" font-weight="normal" fill="#fff">1</text>
<text transform="translate(164.34,51.3) scale(0.840,1)" text-anchor="middle" font-family='"Liberation Sans", sans-serif' font-size="13.50" font-weight="normal" fill="#fff">0</text>
<text transform="translate(178.18,51.3) scale(0.840,1)" text-anchor="middle" font-family='"Liberation Sans", sans-serif' font-size="13.50" font-weight="normal" fill="#fff">2</text>
<text transform="translate(185.10,51.3) scale(0.840,1)" text-anchor="middle" font-family='"Liberation Sans", sans-serif' font-size="13.50" font-weight="normal" fill="#fff">9</text>
<text transform="translate(192.02,51.3) scale(0.840,1)" text-anchor="middle" font-family='"Liberation Sans", sans-serif' font-size="13.50" font-weight="normal" fill="#fff">.</text>
<text transform="translate(198.94,51.3) scale(0.840,1)" text-anchor="middle" font-family='"Liberation Sans", sans-serif' font-size="13.50" font-weight="normal" fill="#fff">4</text>
<text transform="translate(205.86,51.3) scale(0.840,1)" text-anchor="middle" font-family='"Liberation Sans", sans-serif' font-size="13.50" font-weight="normal" fill="#fff">0</text>
<text transform="translate(226.62,51.3) scale(0.500,1)" text-anchor="middle" font-family='"Liberation Serif", serif' font-size="14.85" font-weight="normal" fill="#fff">M</text>
<text transform="translate(233.54,51.3) scale(0.616,1)" text-anchor="middle" font-family='"Liberation Serif", serif' font-size="14.85" font-weight="normal" fill="#fff">A</text>
<text transform="translate(240.46,51.3) scale(0.840,1)" text-anchor="middle" font-family='"Liberation Sans", sans-serif' font-size="13.50" font-weight="normal" fill="#fff">2</text>
<text transform="translate(247.38,51.3) scale(0.840,1)" text-anchor="middle" font-family='"Liberation Sans", sans-serif' font-size="13.50" font-weight="normal" fill="#fff">0</text>
<text transform="translate(261.22,51.3) scale(0.840,1)" text-anchor="middle" font-family='"Liberation Sans", sans-serif' font-size="13.50" font-weight="normal" fill="#fff">2</text>
<text transform="translate(268.14,51.3) scale(0.840,1)" text-anchor="middle" font-family='"Liberation Sans", sans-serif' font-size="13.50" font-weight="normal" fill="#fff">9</text>
<text transform="translate(275.06,51.3) scale(0.840,1)" text-anchor="middle" font-family='"Liberation Sans", sans-serif' font-size="13.50" font-weight="normal" fill="#fff">.</text>
<text transform="translate(281.98,51.3) scale(0.840,1)" text-anchor="middle" font-family='"Liberation Sans", sans-serif' font-size="13.50" font-weight="normal" fill="#fff">7</text>
<text transform="translate(288.90,51.3) scale(0.840,1)" text-anchor="middle" font-family='"Liberation Sans", sans-serif' font-size="13.50" font-weight="normal" fill="#fff">8</text>
<text transform="translate(309.66,51.3) scale(0.500,1)" text-anchor="middle" font-family='"Liberation Serif", serif' font-size="14.85" font-weight="normal" fill="#fff">M</text>
<text transform="translate(316.58,51.3) scale(0.616,1)" text-anchor="middle" font-family='"Liberation Serif", serif' font-size="14.85" font-weight="normal" fill="#fff">A</text>
<text transform="translate(323.50,51.3) scale(0.840,1)" text-anchor="middle" font-family='"Liberation Sans", sans-serif' font-size="13.50" font-weight="normal" fill="#fff">6</text>
<text transform="translate(330.42,51.3) scale(0.840,1)" text-anchor="middle" font-family='"Liberation Sans", sans-serif' font-size="13.50" font-weight="normal" fill="#fff">0</text>
<text transform="translate(344.26,51.3) scale(0.840,1)" text-anchor="middle" font-family='"Liberation Sans", sans-serif' font-size="13.50" font-weight="normal" fill="#fff">3</text>
<text transform="translate(351.18,51.3) scale(0.840,1)" text-anchor="middle" font-family='"Liberation Sans", sans-serif' font-size="13.50" font-weight="normal" fill="#fff">1</text>
<text transform="translate(358.10,51.3) scale(0.840,1)" text-anchor="middle" font-family='"Liberation Sans", sans-serif' font-size="13.50" font-weight="normal" fill="#fff">.</text>
<text transform="translate(365.02,51.3) scale(0.840,1)" text-anchor="middle" font-family='"Liberation Sans", sans-serif' font-size="13.50" font-weight="normal" fill="#fff">0</text>
<text transform="translate(371.94,51.3) scale(0.840,1)" text-anchor="middle" font-family='"Liberation Sans", sans-serif' font-size="13.50" font-weight="normal" fill="#fff">8</text>
<text transform="translate(392.70,51.3) scale(0.500,1)" text-anchor="middle" font-family='"Liberation Serif", serif' font-size="14.85" font-weight="normal" fill="#fff">M</text>
<text transform="translate(399.62,51.3) scale(0.616,1)" text-anchor="middle" font-family='"Liberation Serif", serif' font-size="14.85" font-weight="normal" fill="#fff">A</text>
<text transform="translate(406.54,51.3) scale(0.840,1)" text-anchor="middle" font-family='"Liberation Sans", sans-serif' font-size="13.50" font-weight="normal" fill="#fff">1</text>
<text transform="translate(413.46,51.3) scale(0.840,1)" text-anchor="middle" font-family='"Liberation Sans", sans-serif' font-size="13.50" font-weight="normal" fill="#fff">2</text>
<text transform="translate(420.38,51.3) scale(0.840,1)" text-anchor="middle" font-family='"Liberation Sans", sans-serif' font-size="13.50" font-weight="normal" fill="#fff">0</text>
<text transform="translate(434.22,51.3) scale(0.840,1)" text-anchor="middle" font-family='"Liberation Sans", sans-serif' font-size="13.50" font-weight="normal" fill="#fff">3</text>
<text transform="translate(441.14,51.3) scale(0.840,1)" text-anchor="middle" font-family='"Liberation Sans", sans-serif' font-size="13.50" font-weight="normal" fill="#fff">2</text>
<text transform="translate(448.06,51.3) scale(0.840,1)" text-anchor="middle" font-family='"Liberation Sans", sans-serif' font-size="13.50" font-weight="normal" fill="#fff">.</text>
<text transform="translate(454.98,51.3) scale(0.840,1)" text-anchor="middle" font-family='"Liberation Sans", sans-serif' font-size="13.50" font-weight="normal" fill="#fff">0</text>
<text transform="translate(461.90,51.3) scale(0.840,1)" text-anchor="middle" font-family='"Liberation Sans", sans-serif' font-size="13.50" font-weight="normal" fill="#fff">0</text>
<text transform="translate(482.66,51.3) scale(0.500,1)" text-anchor="middle" font-family='"Liberation Serif", serif' font-size="14.85" font-weight="normal" fill="#fff">M</text>
<text transform="translate(489.58,51.3) scale(0.616,1)" text-anchor="middle" font-family='"Liberation Serif", serif' font-size="14.85" font-weight="normal" fill="#fff">A</text>
<text transform="translate(496.50,51.3) scale(0.840,1)" text-anchor="middle" font-family='"Liberation Sans", sans-serif' font-size="13.50" font-weight="normal" fill="#fff">2</text>
<text transform="translate(503.42,51.3) scale(0.840,1)" text-anchor="middle" font-family='"Liberation Sans", sans-serif' font-size="13.50" font-weight="normal" fill="#fff">4</text>
<text transform="translate(510.34,51.3) scale(0.840,1)" text-anchor="middle" font-family='"Liberation Sans", sans-serif' font-size="13.50" font-weight="normal" fill="#fff">0</text>
<text transform="translate(524.18,51.3) scale(0.616,1)" text-anchor="middle" font-family='"Liberation Serif", serif' font-size="14.85" font-weight="normal" fill="#fff">N</text>
<text transform="translate(531.10,51.3) scale(0.840,1)" text-anchor="middle" font-family='"Liberation Sans", sans-serif' font-size="13.50" font-weight="normal" fill="#fff">/</text>
<text transform="translate(538.02,51.3) scale(0.616,1)" text-anchor="middle" font-family='"Liberation Serif", serif' font-size="14.85" font-weight="normal" fill="#fff">A</text>
<text transform="translate(66.66,366) scale(0.616,1)" text-anchor="middle" font-family='"Liberation Serif", serif' font-size="14.85" font-weight="normal" fill="#fff">D</text>
<text transform="translate(73.58,366) scale(0.950,1)" text-anchor="middle" font-family='"Liberation Serif", serif' font-size="14.85" font-weight="normal" fill="#fff">I</text>
<text transform="translate(80.50,366) scale(0.799,1)" text-anchor="middle" font-family='"Liberation Serif", serif' font-size="14.85" font-weight="normal" fill="#fff">F</text>
<text transform="translate(87.42,366) scale(0.840,1)" text-anchor="middle" font-family='"Liberation Sans", sans-serif' font-size="13.50" font-weight="normal" fill="#fff">1</text>
<text transform="translate(94.34,366) scale(0.840,1)" text-anchor="middle" font-family='"Liberation Sans", sans-serif' font-size="13.50" font-weight="normal" fill="#fff">2</text>
<text transform="translate(101.26,366) scale(0.840,1)" text-anchor="middle" font-family='"Liberation Sans", sans-serif' font-size="13.50" font-weight="normal" fill="#fff">-</text>
<text transform="translate(108.18,366) scale(0.840,1)" text-anchor="middle" font-family='"Liberation Sans", sans-serif' font-size="13.50" font-weight="normal" fill="#fff">2</text>
<text transform="translate(115.10,366) scale(0.840,1)" text-anchor="middle" font-family='"Liberation Sans", sans-serif' font-size="13.50" font-weight="normal" fill="#fff">6</text>
<text transform="translate(128.94,366) scale(0.840,1)" text-anchor="middle" font-family='"Liberation Sans", sans-serif' font-size="13.50" font-weight="normal" fill="#fff">-</text>
<text transform="translate(135.86,366) scale(0.840,1)" text-anchor="middle" font-family='"Liberation Sans", sans-serif' font-size="13.50" font-weight="normal" fill="#fff">0</text>
<text transform="translate(142.78,366) scale(0.840,1)" text-anchor="middle" font-family='"Liberation Sans", sans-serif' font-size="13.50" font-weight="normal" fill="#fff">.</text>
<text transform="translate(149.70,366) scale(0.840,1)" text-anchor="middle" font-family='"Liberation Sans", sans-serif' font-size="13.50" font-weight="normal" fill="#fff">4</text>
<text transform="translate(156.62,366) scale(0.840,1)" text-anchor="middle" font-family='"Liberation Sans", sans-serif' font-size="13.50" font-weight="normal" fill="#fff">5</text>
<text transform="translate(177.38,366) scale(0.500,1)" text-anchor="middle" font-family='"Liberation Serif", serif' font-size="14.85" font-weight="normal" fill="#fff">M</text>
<text transform="translate(184.30,366) scale(0.616,1)" text-anchor="middle" font-family='"Liberation Serif", serif' font-size="14.85" font-weight="normal" fill="#fff">A</text>
<text transform="translate(191.22,366) scale(0.666,1)" text-anchor="middle" font-family='"Liberation Serif", serif' font-size="14.85" font-weight="normal" fill="#fff">C</text>
<text transform="translate(198.14,366) scale(0.616,1)" text-anchor="middle" font-family='"Liberation Serif", serif' font-size="14.85" font-weight="normal" fill="#fff">D</text>
<text transform="translate(205.06,366) scale(0.840,1)" text-anchor="middle" font-family='"Liberation Sans", sans-serif' font-size="13.50" font-weight="normal" fill="#fff">9</text>
<text transform="translate(218.90,366) scale(0.840,1)" text-anchor="middle" font-family='"Liberation Sans", sans-serif' font-size="13.50" font-weight="normal" fill="#fff">-</text>
<text transform="translate(225.82,366) scale(0.840,1)" text-anchor="middle" font-family='"Liberation Sans", sans-serif' font-size="13.50" font-weight="normal" fill="#fff">0</text>
<text transform="translate(232.74,366) scale(0.840,1)" text-anchor="middle" font-family='"Liberation Sans", sans-serif' font-size="13.50" font-weight="normal" fill="#fff">.</text>
<text transform="translate(239.66,366) scale(0.840,1)" text-anchor="middle" font-family='"Liberation Sans", sans-serif' font-size="13.50" font-weight="normal" fill="#fff">4</text>
<text transform="translate(246.58,366) scale(0.840,1)" text-anchor="middle" font-family='"Liberation Sans", sans-serif' font-size="13.50" font-weight="normal" fill="#fff">9</text>
<text transform="translate(267.34,366) scale(0.741,1)" text-anchor="middle" font-family='"Liberation Serif", serif' font-size="14.85" font-weight="normal" fill="#fff">O</text>
<text transform="translate(274.26,366) scale(0.799,1)" text-anchor="middle" font-family='"Liberation Serif", serif' font-size="14.85" font-weight="normal" fill="#fff">S</text>
<text transform="translate(281.18,366) scale(0.666,1)" text-anchor="middle" font-family='"Liberation Serif", serif' font-size="14.85" font-weight="normal" fill="#fff">C</text>
<text transform="translate(295.02,366) scale(0.840,1)" text-anchor="middle" font-family='"Liberation Sans", sans-serif' font-size="13.50" font-weight="normal" fill="#fff">0</text>
<text transform="translate(301.94,366) scale(0.840,1)" text-anchor="middle" font-family='"Liberation Sans", sans-serif' font-size="13.50" font-weight="normal" fill="#fff">.</text>
<text transform="translate(308.86,366) scale(0.840,1)" text-anchor="middle" font-family='"Liberation Sans", sans-serif' font-size="13.50" font-weight="normal" fill="#fff">0</text>
<text transform="translate(315.78,366) scale(0.840,1)" text-anchor="middle" font-family='"Liberation Sans", sans-serif' font-size="13.50" font-weight="normal" fill="#fff">3</text>
<text transform="translate(66.66,506) scale(0.616,1)" text-anchor="middle" font-family='"Liberation Serif", serif' font-size="14.85" font-weight="normal" fill="#fff">K</text>
<text transform="translate(73.58,506) scale(0.840,1)" text-anchor="middle" font-family='"Liberation Sans", sans-serif' font-size="13.50" font-weight="normal" fill="#fff">9</text>
<text transform="translate(87.42,506) scale(0.840,1)" text-anchor="middle" font-family='"Liberation Sans", sans-serif' font-size="13.50" font-weight="normal" fill="#fff">4</text>
<text transform="translate(94.34,506) scale(0.840,1)" text-anchor="middle" font-family='"Liberation Sans", sans-serif' font-size="13.50" font-weight="normal" fill="#fff">4</text>
<text transform="translate(101.26,506) scale(0.840,1)" text-anchor="middle" font-family='"Liberation Sans", sans-serif' font-size="13.50" font-weight="normal" fill="#fff">.</text>
<text transform="translate(108.18,506) scale(0.840,1)" text-anchor="middle" font-family='"Liberation Sans", sans-serif' font-size="13.50" font-weight="normal" fill="#fff">6</text>
<text transform="translate(115.10,506) scale(0.840,1)" text-anchor="middle" font-family='"Liberation Sans", sans-serif' font-size="13.50" font-weight="normal" fill="#fff">1</text>
<text transform="translate(122.02,506) scale(0.840,1)" text-anchor="middle" font-family='"Liberation Sans", sans-serif' font-size="13.50" font-weight="normal" fill="#fff">%</text>
<text transform="translate(142.78,506) scale(0.616,1)" text-anchor="middle" font-family='"Liberation Serif", serif' font-size="14.85" font-weight="normal" fill="#fff">D</text>
<text transform="translate(149.70,506) scale(0.840,1)" text-anchor="middle" font-family='"Liberation Sans", sans-serif' font-size="13.50" font-weight="normal" fill="#fff">9</text>
<text transform="translate(163.54,506) scale(0.840,1)" text-anchor="middle" font-family='"Liberation Sans", sans-serif' font-size="13.50" font-weight="normal" fill="#fff">5</text>
<text transform="translate(170.46,506) scale(0.840,1)" text-anchor="middle" font-family='"Liberation Sans", sans-serif' font-size="13.50" font-weight="normal" fill="#fff">0</text>
<text transform="translate(177.38,506) scale(0.840,1)" text-anchor="middle" font-family='"Liberation Sans", sans-serif' font-size="13.50" font-weight="normal" fill="#fff">.</text>
<text transform="translate(184.30,506) scale(0.840,1)" text-anchor="middle" font-family='"Liberation Sans", sans-serif' font-size="13.50" font-weight="normal" fill="#fff">0</text>
<text transform="translate(191.22,506) scale(0.840,1)" text-anchor="middle" font-family='"Liberation Sans", sans-serif' font-size="13.50" font-weight="normal" fill="#fff">8</text>
<text transform="translate(198.14,506) scale(0.840,1)" text-anchor="middle" font-family='"Liberation Sans", sans-serif' font-size="13.50" font-weight="normal" fill="#fff">%</text>
<text transform="translate(780.00,89.5) scale(0.860,1)" text-anchor="middle" font-family='"Liberation Sans", sans-serif' font-size="14.00" font-weight="normal" fill="#fff">3</text>
<text transform="translate(787.00,89.5) scale(0.860,1)" text-anchor="middle" font-family='"Liberation Sans", sans-serif' font-size="14.00" font-weight="normal" fill="#fff">2</text>
<text transform="translate(794.00,89.5) scale(0.860,1)" text-anchor="middle" font-family='"Liberation Sans", sans-serif' font-size="14.00" font-weight="normal" fill="#fff">.</text>
<text transform="translate(801.00,89.5) scale(0.860,1)" text-anchor="middle" font-family='"Liberation Sans", sans-serif' font-size="14.00" font-weight="normal" fill="#fff">0</text>
<text transform="translate(780.00,121.5) scale(0.860,1)" text-anchor="middle" font-family='"Liberation Sans", sans-serif' font-size="14.00" font-weight="normal" fill="#fff">3</text>
<text transform="translate(787.00,121.5) scale(0.860,1)" text-anchor="middle" font-family='"Liberation Sans", sans-serif' font-size="14.00" font-weight="normal" fill="#fff">1</text>
<text transform="translate(794.00,121.5) scale(0.860,1)" text-anchor="middle" font-family='"Liberation Sans", sans-serif' font-size="14.00" font-weight="normal" fill="#fff">.</text>
<text transform="translate(801.00,121.5) scale(0.860,1)" text-anchor="middle" font-family='"Liberation Sans", sans-serif' font-size="14.00" font-weight="normal" fill="#fff">5</text>
<text transform="translate(780.00,153.5) scale(0.860,1)" text-anchor="middle" font-family='"Liberation Sans", sans-serif' font-size="14.00" font-weight="normal" fill="#fff">3</text>
<text transform="translate(787.00,153.5) scale(0.860,1)" text-anchor="middle" font-family='"Liberation Sans", sans-serif' font-size="14.00" font-weight="normal" fill="#fff">1</text>
<text transform="translate(794.00,153.5) scale(0.860,1)" text-anchor="middle" font-family='"Liberation Sans", sans-serif' font-size="14.00" font-weight="normal" fill="#fff">.</text>
<text transform="translate(801.00,153.5) scale(0.860,1)" text-anchor="middle" font-family='"Liberation Sans", sans-serif' font-size="14.00" font-weight="normal" fill="#fff">0</text>
<text transform="translate(780.00,185.5) scale(0.860,1)" text-anchor="middle" font-family='"Liberation Sans", sans-serif' font-size="14.00" font-weight="normal" fill="#fff">3</text>
<text transform="translate(787.00,185.5) scale(0.860,1)" text-anchor="middle" font-family='"Liberation Sans", sans-serif' font-size="14.00" font-weight="normal" fill="#fff">0</text>
<text transform="translate(794.00,185.5) scale(0.860,1)" text-anchor="middle" font-family='"Liberation Sans", sans-serif' font-size="14.00" font-weight="normal" fill="#fff">.</text>
<text transform="translate(801.00,185.5) scale(0.860,1)" text-anchor="middle" font-family='"Liberation Sans", sans-serif' font-size="14.00" font-weight="normal" fill="#fff">5</text>
<text transform="translate(780.00,218.5) scale(0.860,1)" text-anchor="middle" font-family='"Liberation Sans", sans-serif' font-size="14.00" font-weight="normal" fill="#fff">3</text>
<text transform="translate(787.00,218.5) scale(0.860,1)" text-anchor="middle" font-family='"Liberation Sans", sans-serif' font-size="14.00" font-weight="normal" fill="#fff">0</text>
<text transform="translate(794.00,218.5) scale(0.860,1)" text-anchor="middle" font-family='"Liberation Sans", sans-serif' font-size="14.00" font-weight="normal" fill="#fff">.</text>
<text transform="translate(801.00,218.5) scale(0.860,1)" text-anchor="middle" font-family='"Liberation Sans", sans-serif' font-size="14.00" font-weight="normal" fill="#fff">0</text>
<text transform="translate(780.00,250.5) scale(0.860,1)" text-anchor="middle" font-family='"Liberation Sans", sans-serif' font-size="14.00" font-weight="normal" fill="#fff">2</text>
<text transform="translate(787.00,250.5) scale(0.860,1)" text-anchor="middle" font-family='"Liberation Sans", sans-serif' font-size="14.00" font-weight="normal" fill="#fff">9</text>
<text transform="translate(794.00,250.5) scale(0.860,1)" text-anchor="middle" font-family='"Liberation Sans", sans-serif' font-size="14.00" font-weight="normal" fill="#fff">.</text>
<text transform="translate(801.00,250.5) scale(0.860,1)" text-anchor="middle" font-family='"Liberation Sans", sans-serif' font-size="14.00" font-weight="normal" fill="#fff">5</text>
<text transform="translate(780.00,282.5) scale(0.860,1)" text-anchor="middle" font-family='"Liberation Sans", sans-serif' font-size="14.00" font-weight="normal" fill="#fff">2</text>
<text transform="translate(787.00,282.5) scale(0.860,1)" text-anchor="middle" font-family='"Liberation Sans", sans-serif' font-size="14.00" font-weight="normal" fill="#fff">9</text>
<text transform="translate(794.00,282.5) scale(0.860,1)" text-anchor="middle" font-family='"Liberation Sans", sans-serif' font-size="14.00" font-weight="normal" fill="#fff">.</text>
<text transform="translate(801.00,282.5) scale(0.860,1)" text-anchor="middle" font-family='"Liberation Sans", sans-serif' font-size="14.00" font-weight="normal" fill="#fff">0</text>
<text transform="translate(780.00,314.5) scale(0.860,1)" text-anchor="middle" font-family='"Liberation Sans", sans-serif' font-size="14.00" font-weight="normal" fill="#fff">2</text>
<text transform="translate(787.00,314.5) scale(0.860,1)" text-anchor="middle" font-family='"Liberation Sans", sans-serif' font-size="14.00" font-weight="normal" fill="#fff">8</text>
<text transform="translate(794.00,314.5) scale(0.860,1)" text-anchor="middle" font-family='"Liberation Sans", sans-serif' font-size="14.00" font-weight="normal" fill="#fff">.</text>
<text transform="translate(801.00,314.5) scale(0.860,1)" text-anchor="middle" font-family='"Liberation Sans", sans-serif' font-size="14.00" font-weight="normal" fill="#fff">5</text>
<text transform="translate(780.00,346.5) scale(0.860,1)" text-anchor="middle" font-family='"Liberation Sans", sans-serif' font-size="14.00" font-weight="normal" fill="#fff">2</text>
<text transform="translate(787.00,346.5) scale(0.860,1)" text-anchor="middle" font-family='"Liberation Sans", sans-serif' font-size="14.00" font-weight="normal" fill="#fff">8</text>
<text transform="translate(794.00,346.5) scale(0.860,1)" text-anchor="middle" font-family='"Liberation Sans", sans-serif' font-size="14.00" font-weight="normal" fill="#fff">.</text>
<text transform="translate(801.00,346.5) scale(0.860,1)" text-anchor="middle" font-family='"Liberation Sans", sans-serif' font-size="14.00" font-weight="normal" fill="#fff">0</text>
<text transform="translate(780.00,394.5) scale(0.860,1)" text-anchor="middle" font-family='"Liberation Sans", sans-serif' font-size="14.00" font-weight="normal" fill="#fff">0</text>
<text transform="translate(787.00,394.5) scale(0.860,1)" text-anchor="middle" font-family='"Liberation Sans", sans-serif' font-size="14.00" font-weight="normal" fill="#fff">.</text>
<text transform="translate(794.00,394.5) scale(0.860,1)" text-anchor="middle" font-family='"Liberation Sans", sans-serif' font-size="14.00" font-weight="normal" fill="#fff">1</text>
<text transform="translate(780.00,417.5) scale(0.860,1)" text-anchor="middle" font-family='"Liberation Sans", sans-serif' font-size="14.00" font-weight="normal" fill="#fff">0</text>
<text transform="translate(787.00,417.5) scale(0.860,1)" text-anchor="middle" font-family='"Liberation Sans", sans-serif' font-size="14.00" font-weight="normal" fill="#fff">.</text>
<text transform="translate(794.00,417.5) scale(0.860,1)" text-anchor="middle" font-family='"Liberation Sans", sans-serif' font-size="14.00" font-weight="normal" fill="#fff">0</text>
<text transform="translate(780.00,440.5) scale(0.860,1)" text-anchor="middle" font-family='"Liberation Sans", sans-serif' font-size="14.00" font-weight="normal" fill="#fff">-</text>
<text transform="translate(787.00,440.5) scale(0.860,1)" text-anchor="middle" font-family='"Liberation Sans", sans-serif' font-size="14.00" font-weight="normal" fill="#fff">0</text>
<text transform="translate(794.00,440.5) scale(0.860,1)" text-anchor="middle" font-family='"Liberation Sans", sans-serif' font-size="14.00" font-weight="normal" fill="#fff">.</text>
<text transform="translate(801.00,440.5) scale(0.860,1)" text-anchor="middle" font-family='"Liberation Sans", sans-serif' font-size="14.00" font-weight="normal" fill="#fff">2</text>
<text transform="translate(780.00,463.5) scale(0.860,1)" text-anchor="middle" font-family='"Liberation Sans", sans-serif' font-size="14.00" font-weight="normal" fill="#fff">-</text>
<text transform="translate(787.00,463.5) scale(0.860,1)" text-anchor="middle" font-family='"Liberation Sans", sans-serif' font-size="14.00" font-weight="normal" fill="#fff">0</text>
<text transform="translate(794.00,463.5) scale(0.860,1)" text-anchor="middle" font-family='"Liberation Sans", sans-serif' font-size="14.00" font-weight="normal" fill="#fff">.</text>
<text transform="translate(801.00,463.5) scale(0.860,1)" text-anchor="middle" font-family='"Liberation Sans", sans-serif' font-size="14.00" font-weight="normal" fill="#fff">4</text>
<text transform="translate(780.00,486.5) scale(0.860,1)" text-anchor="middle" font-family='"Liberation Sans", sans-serif' font-size="14.00" font-weight="normal" fill="#fff">-</text>
<text transform="translate(787.00,486.5) scale(0.860,1)" text-anchor="middle" font-family='"Liberation Sans", sans-serif' font-size="14.00" font-weight="normal" fill="#fff">0</text>
<text transform="translate(794.00,486.5) scale(0.860,1)" text-anchor="middle" font-family='"Liberation Sans", sans-serif' font-size="14.00" font-weight="normal" fill="#fff">.</text>
<text transform="translate(801.00,486.5) scale(0.860,1)" text-anchor="middle" font-family='"Liberation Sans", sans-serif' font-size="14.00" font-weight="normal" fill="#fff">6</text>
<text transform="translate(780.00,540.5) scale(0.860,1)" text-anchor="middle" font-family='"Liberation Sans", sans-serif' font-size="14.00" font-weight="normal" fill="#fff">7</text>
<text transform="translate(787.00,540.5) scale(0.860,1)" text-anchor="middle" font-family='"Liberation Sans", sans-serif' font-size="14.00" font-weight="normal" fill="#fff">5</text>
<text transform="translate(780.00,569.5) scale(0.860,1)" text-anchor="middle" font-family='"Liberation Sans", sans-serif' font-size="14.00" font-weight="normal" fill="#fff">5</text>
<text transform="translate(787.00,569.5) scale(0.860,1)" text-anchor="middle" font-family='"Liberation Sans", sans-serif' font-size="14.00" font-weight="normal" fill="#fff">0</text>
<text transform="translate(780.00,598.5) scale(0.860,1)" text-anchor="middle" font-family='"Liberation Sans", sans-serif' font-size="14.00" font-weight="normal" fill="#fff">2</text>
<text transform="translate(787.00,598.5) scale(0.860,1)" text-anchor="middle" font-family='"Liberation Sans", sans-serif' font-size="14.00" font-weight="normal" fill="#fff">5</text>
<rect x="636" y="17" width="35" height="16" fill="#d5d9dd"/>
<rect x="636" y="17" width="35" height="1" fill="#ffffff"/>
<rect x="636" y="17" width="1" height="16" fill="#ffffff"/>
<rect x="636" y="32" width="35" height="1" fill="#7d8085"/>
<rect x="670" y="17" width="1" height="16" fill="#7d8085"/>
<path transform="translate(641.5,19.5) scale(1.0)" d="M2,0H10M0,2H12M2,4H10M6,0V5M1,5H11M2,7H10V10H2ZM6,7V10M2,8.5H10M0,11H12" fill="none" stroke="#000000" stroke-width="1.000" stroke-linecap="square" shape-rendering="crispEdges"/>
<path transform="translate(654.5,19.5) scale(1.0)" d="M3,0L1,3.5L4,4L1,7.5H5M3,7.5V12M1,9.5L0.5,11M5,9.5L5.5,11M8,0L7.5,1.5M6,2H11V6H6ZM6,4H11M8.5,6V12M6,8L7.5,10M11,8L9.5,10M8.5,9L11.5,12" fill="none" stroke="#000000" stroke-width="1.000" stroke-linecap="square" shape-rendering="crispEdges"/>
<rect x="675" y="17" width="35" height="16" fill="#d5d9dd"/>
<rect x="675" y="17" width="35" height="1" fill="#ffffff"/>
<rect x="675" y="17" width="1" height="16" fill="#ffffff"/>
<rect x="675" y="32" width="35" height="1" fill="#7d8085"/>
<rect x="709" y="17" width="1" height="16" fill="#7d8085"/>
<path transform="translate(680.5,19.5) scale(1.0)" d="M2.5,0L0.5,3M3,3.5L0.5,6.5M2,5V12M5,0.5H11M5.5,2H10.5V6H5.5ZM5.5,4H10.5M6,7L5,9M6,7.5H10L5,12M7,9.5L11.5,12" fill="none" stroke="#000000" stroke-width="1.000" stroke-linecap="square" shape-rendering="crispEdges"/>
<path transform="translate(692.5,19.5) scale(1.0)" d="M1,1H11.5M1.5,1Q1.5,9 0.5,12M6,1.5L5.5,3M3.5,3H9.5V7.5H3.5ZM3.5,5.2H9.5M6.5,7.5V12L5.5,11.5M4,9L3,11M9,9L10.5,11" fill="none" stroke="#000000" stroke-width="1.000" stroke-linecap="square" shape-rendering="crispEdges"/>
<rect x="697" y="35" width="35" height="16" fill="#d5d9dd"/>
<rect x="697" y="35" width="35" height="1" fill="#ffffff"/>
<rect x="697" y="35" width="1" height="16" fill="#ffffff"/>
<rect x="697" y="50" width="35" height="1" fill="#7d8085"/>
<rect x="731" y="35" width="1" height="16" fill="#7d8085"/>
<path transform="translate(702.5,37.5) scale(1.0)" d="M2,2.5L4,0.3L5.5,2.5ZM6.5,2.5L8.5,0.3L10,2.5ZM0.5,4H11.5M5,4L1,8M7,4L11.5,8M8,5.8L3,7.8M9,7.8L2,10.3M10,10L1,12" fill="none" stroke="#000000" stroke-width="1.000" stroke-linecap="square" shape-rendering="crispEdges"/>
<path transform="translate(714.5,37.5) scale(1.0)" d="M0.5,2H6M3.2,0V6M1,1L1.5,3.5M5.5,1L5,3.5M0.5,4.5H6M1,6H5.5V7.5H1ZM3,7.5L1,12M0.5,9.5H6M5,9.5L1,12M2,10L5.5,12M8,0.5L7,4M7.5,3H11.5M10.5,3Q9,9 6.5,12M8,6Q9.5,10 11.5,12" fill="none" stroke="#000000" stroke-width="1.000" stroke-linecap="square" shape-rendering="crispEdges"/>
<rect x="736" y="35" width="35" height="16" fill="#d5d9dd"/>
<rect x="736" y="35" width="35" height="1" fill="#ffffff"/>
<rect x="736" y="35" width="1" height="16" fill="#ffffff"/>
<rect x="736" y="50" width="35" height="1" fill="#7d8085"/>
<rect x="770" y="35" width="1" height="16" fill="#7d8085"/>
<path transform="translate(741.5,37.5) scale(1.0)" d="M0.5,3.5H4.5M2.5,0V11.5L1.5,11M0.5,8L4.5,6M6,0.5V3.8H11.2M6,2.2L10.5,0.5M6.5,6H11V12H6.5ZM6.5,9H11" fill="none" stroke="#000000" stroke-width="1.000" stroke-linecap="square" shape-rendering="crispEdges"/>
<path transform="translate(754.5,37.5) scale(1.0)" d="M0.5,3H4.5M2.5,0V12M2.5,3.5L0.5,8M2.5,4L4.5,7M5.5,0.5H11.5M6,1.5H11V4.5H6ZM7.7,1.5V4.5M9.3,1.5V4.5M6.5,6H10.5M5.5,8H11.5M8.5,8V12L7.5,11.5M7,9.5L5.5,11M10,9.5L11.5,11" fill="none" stroke="#000000" stroke-width="1.000" stroke-linecap="square" shape-rendering="crispEdges"/>
<rect x="697" y="348" width="35" height="16" fill="#d5d9dd"/>
<rect x="697" y="348" width="35" height="1" fill="#ffffff"/>
<rect x="697" y="348" width="1" height="16" fill="#ffffff"/>
<rect x="697" y="363" width="35" height="1" fill="#7d8085"/>
<rect x="731" y="348" width="1" height="16" fill="#7d8085"/>
<path transform="translate(702.5,350.5) scale(1.0)" d="M2,2.5L4,0.3L5.5,2.5ZM6.5,2.5L8.5,0.3L10,2.5ZM0.5,4H11.5M5,4L1,8M7,4L11.5,8M8,5.8L3,7.8M9,7.8L2,10.3M10,10L1,12" fill="none" stroke="#000000" stroke-width="1.000" stroke-linecap="square" shape-rendering="crispEdges"/>
<path transform="translate(714.5,350.5) scale(1.0)" d="M0.5,2H6M3.2,0V6M1,1L1.5,3.5M5.5,1L5,3.5M0.5,4.5H6M1,6H5.5V7.5H1ZM3,7.5L1,12M0.5,9.5H6M5,9.5L1,12M2,10L5.5,12M8,0.5L7,4M7.5,3H11.5M10.5,3Q9,9 6.5,12M8,6Q9.5,10 11.5,12" fill="none" stroke="#000000" stroke-width="1.000" stroke-linecap="square" shape-rendering="crispEdges"/>
<rect x="736" y="348" width="35" height="16" fill="#d5d9dd"/>
<rect x="736" y="348" width="35" height="1" fill="#ffffff"/>
<rect x="736" y="348" width="1" height="16" fill="#ffffff"/>
<rect x="736" y="363" width="35" height="1" fill="#7d8085"/>
<rect x="770" y="348" width="1" height="16" fill="#7d8085"/>
<path transform="translate(741.5,350.5) scale(1.0)" d="M0.5,3.5H4.5M2.5,0V11.5L1.5,11M0.5,8L4.5,6M6,0.5V3.8H11.2M6,2.2L10.5,0.5M6.5,6H11V12H6.5ZM6.5,9H11" fill="none" stroke="#000000" stroke-width="1.000" stroke-linecap="square" shape-rendering="crispEdges"/>
<path transform="translate(754.5,350.5) scale(1.0)" d="M0.5,3H4.5M2.5,0V12M2.5,3.5L0.5,8M2.5,4L4.5,7M5.5,0.5H11.5M6,1.5H11V4.5H6ZM7.7,1.5V4.5M9.3,1.5V4.5M6.5,6H10.5M5.5,8H11.5M8.5,8V12L7.5,11.5M7,9.5L5.5,11M10,9.5L11.5,11" fill="none" stroke="#000000" stroke-width="1.000" stroke-linecap="square" shape-rendering="crispEdges"/>
<rect x="697" y="489" width="35" height="16" fill="#d5d9dd"/>
<rect x="697" y="489" width="35" height="1" fill="#ffffff"/>
<rect x="697" y="489" width="1" height="16" fill="#ffffff"/>
<rect x="697" y="504" width="35" height="1" fill="#7d8085"/>
<rect x="731" y="489" width="1" height="16" fill="#7d8085"/>
<path transform="translate(702.5,491.5) scale(1.0)" d="M2,2.5L4,0.3L5.5,2.5ZM6.5,2.5L8.5,0.3L10,2.5ZM0.5,4H11.5M5,4L1,8M7,4L11.5,8M8,5.8L3,7.8M9,7.8L2,10.3M10,10L1,12" fill="none" stroke="#000000" stroke-width="1.000" stroke-linecap="square" shape-rendering="crispEdges"/>
<path transform="translate(714.5,491.5) scale(1.0)" d="M0.5,2H6M3.2,0V6M1,1L1.5,3.5M5.5,1L5,3.5M0.5,4.5H6M1,6H5.5V7.5H1ZM3,7.5L1,12M0.5,9.5H6M5,9.5L1,12M2,10L5.5,12M8,0.5L7,4M7.5,3H11.5M10.5,3Q9,9 6.5,12M8,6Q9.5,10 11.5,12" fill="none" stroke="#000000" stroke-width="1.000" stroke-linecap="square" shape-rendering="crispEdges"/>
<rect x="736" y="489" width="35" height="16" fill="#d5d9dd"/>
<rect x="736" y="489" width="35" height="1" fill="#ffffff"/>
<rect x="736" y="489" width="1" height="16" fill="#ffffff"/>
<rect x="736" y="504" width="35" height="1" fill="#7d8085"/>
<rect x="770" y="489" width="1" height="16" fill="#7d8085"/>
<path transform="translate(741.5,491.5) scale(1.0)" d="M0.5,3.5H4.5M2.5,0V11.5L1.5,11M0.5,8L4.5,6M6,0.5V3.8H11.2M6,2.2L10.5,0.5M6.5,6H11V12H6.5ZM6.5,9H11" fill="none" stroke="#000000" stroke-width="1.000" stroke-linecap="square" shape-rendering="crispEdges"/>
<path transform="translate(754.5,491.5) scale(1.0)" d="M0.5,3H4.5M2.5,0V12M2.5,3.5L0.5,8M2.5,4L4.5,7M5.5,0.5H11.5M6,1.5H11V4.5H6ZM7.7,1.5V4.5M9.3,1.5V4.5M6.5,6H10.5M5.5,8H11.5M8.5,8V12L7.5,11.5M7,9.5L5.5,11M10,9.5L11.5,11" fill="none" stroke="#000000" stroke-width="1.000" stroke-linecap="square" shape-rendering="crispEdges"/>
<text transform="translate(722.6,30.3) scale(1,1)" text-anchor="middle" font-family='"Liberation Sans", sans-serif' font-size="14.5" fill="#ffffff">©</text>
<text transform="translate(732.22,30) scale(0.950,1)" text-anchor="middle" font-family='"Liberation Serif", serif' font-size="13.75" font-weight="normal" fill="#fff">c</text>
<text transform="translate(738.07,30) scale(0.950,1)" text-anchor="middle" font-family='"Liberation Serif", serif' font-size="13.75" font-weight="normal" fill="#fff">n</text>
<text transform="translate(743.92,30) scale(0.665,1)" text-anchor="middle" font-family='"Liberation Serif", serif' font-size="13.75" font-weight="normal" fill="#fff">Y</text>
<text transform="translate(749.77,30) scale(0.786,1)" text-anchor="middle" font-family='"Liberation Serif", serif' font-size="13.75" font-weight="normal" fill="#fff">E</text>
<text transform="translate(755.62,30) scale(0.863,1)" text-anchor="middle" font-family='"Liberation Serif", serif' font-size="13.75" font-weight="normal" fill="#fff">S</text>
<path transform="translate(759.5,19.5) scale(1.0)" d="M3,0L0.5,4M3,0L5.5,3M1,4.5H5M1,7H5M3,4.5V11M0.5,11.5L5.5,10.5M1.5,8.5L2,10M4.5,8.5L4,10M6.5,1H11.5M7,1V11.5H11.5M7,4H10.5V8.5H7" fill="none" stroke="#ffffff" stroke-width="1.000" stroke-linecap="square" shape-rendering="crispEdges"/>
<path transform="translate(772.5,19.5) scale(1.0)" d="M6,0V1.5M1,1.8H11M3.5,3H8.5V5.5H3.5ZM1.5,7H10.5L7,8.5M6.5,8V12L5,11.5M1,9.5H11" fill="none" stroke="#ffffff" stroke-width="1.000" stroke-linecap="square" shape-rendering="crispEdges"/>
<path transform="translate(784.5,19.5) scale(1.0)" d="M3,0L1,3.5L4,4L1,7.5H5M3,7.5V12M1,9.5L0.5,11M5,9.5L5.5,11M6,12V1H11.5V12L10.5,11.5M7.5,3L8.5,4.5M10,3L9,4.5M7,5.5H10.5M8.7,5.5V7M7.5,8.5L8.5,10M10,8.5L9,10" fill="none" stroke="#ffffff" stroke-width="1.000" stroke-linecap="square" shape-rendering="crispEdges"/>
<rect x="2" y="592" width="960" height="10" fill="#edf2f4"/>
<rect x="35" y="593" width="870" height="9" fill="#cbd4da"/>
<path d="M26,595 L20,599 L24,602" fill="none" stroke="#6a7378" stroke-width="2.2"/>
<rect x="0" y="592" width="1" height="10" fill="#000000"/>
</svg></body></html>
